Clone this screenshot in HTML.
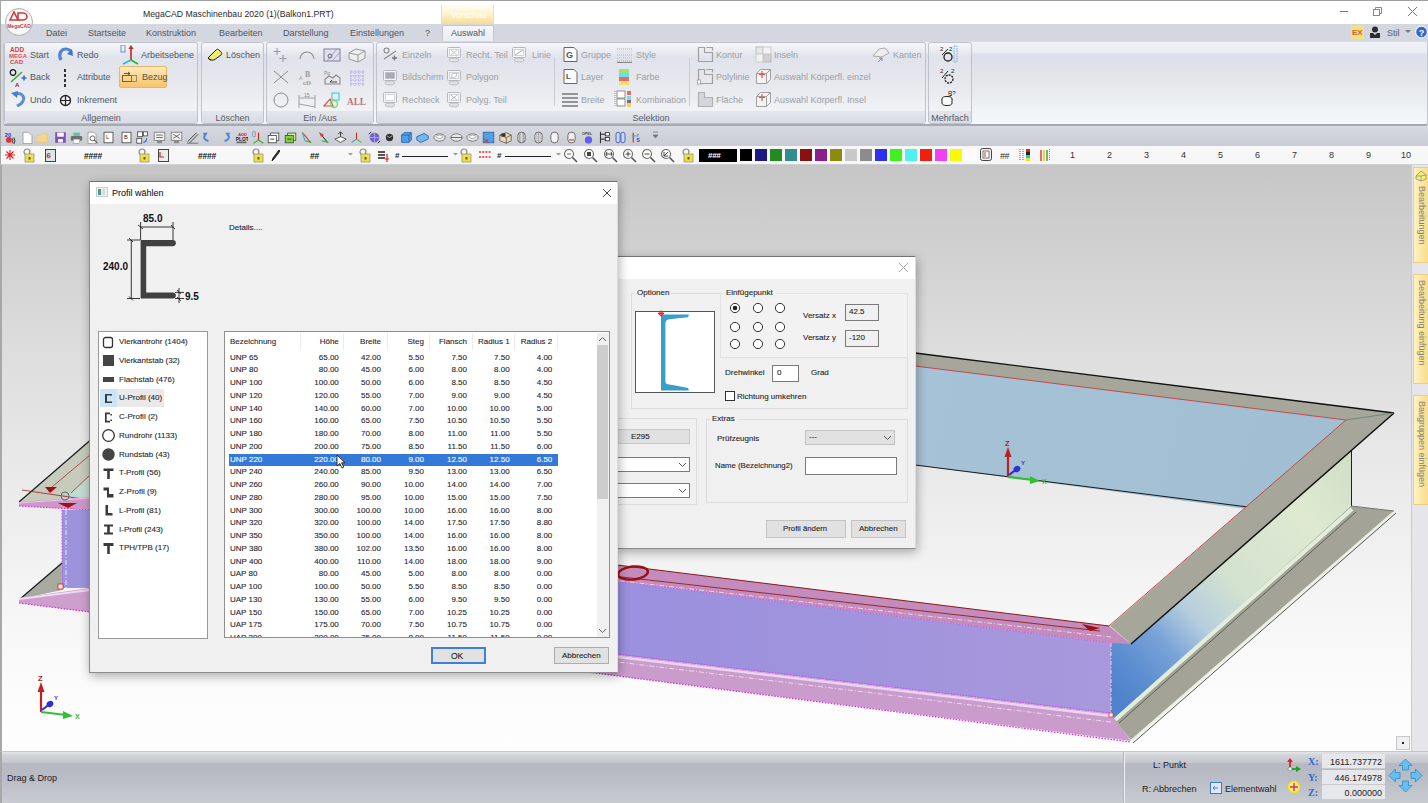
<!DOCTYPE html>
<html><head><meta charset="utf-8"><style>
*{box-sizing:border-box}
html,body{margin:0;padding:0}
body{width:1428px;height:803px;overflow:hidden;position:relative;font-family:"Liberation Sans",sans-serif;font-size:9px;color:#222;background:#fff}
.a{position:absolute}
.t{position:absolute;white-space:nowrap;line-height:10px}
#title{left:0;top:0;width:1428px;height:24px;background:#fff;border-top:1px solid #a0a0a0;border-left:1px solid #a8a8a8}
#tabs{left:0;top:24px;width:1428px;height:17px;background:#d4d7e0;border-left:1px solid #a8a8a8}
#ribbon{left:0;top:41px;width:1428px;height:85px;background:#d4d7e0;border-left:1px solid #a8a8a8}
#rbody{left:2px;top:0px;width:1425px;height:85px;border:1px solid #c4c7ce;border-top-color:#d8dbe3;border-bottom:2px solid #a6a9b0;border-radius:3px;background:linear-gradient(#eff1f7 0%,#eceef6 12%,#dde0ea 15%,#dfe2ea 30%,#e5e7eb 50%,#ebeef1 70%,#f2f5f8 88%,#f4f7f9 100%)}
.grp{position:absolute;top:42px;height:82px;border:1px solid #bfc2ca;border-radius:3px;background:linear-gradient(#f7f8fb 0%,#eceef4 8%,#e0e3eb 18%,#e4e6ec 40%,#eaecf0 65%,#f1f3f6 85%,#e4e7ec 100%)}
.glab{position:absolute;left:0;right:0;bottom:0;height:12px;text-align:center;color:#555a68;font-size:9px;line-height:14px;background:linear-gradient(#e3e6eb,#d9dce2);border-radius:0 0 3px 3px}
.rt{position:absolute;white-space:nowrap;font-size:9px;line-height:10px;color:#50545e}
.rg{color:#9a9ea6}
#tb1{left:0;top:126px;width:1428px;height:20px;background:linear-gradient(#d6d9e0,#c9ccd3);border-left:1px solid #a8a8a8}
#tb2{left:0;top:146px;width:1428px;height:19px;background:#f7f7f8;border-left:1px solid #a8a8a8;border-bottom:1px solid #cfd0d4}
#view{left:0;top:165px;width:1411px;height:586px;background:linear-gradient(#c6c6c6 0%,#cfcfcf 12%,#dcdcdc 30%,#e8e8e8 50%,#f4f4f4 72%,#fbfbfb 88%,#fefefe 100%);border-left:2px solid #a8a8a8}
#rpanel{left:1411px;top:165px;width:17px;height:586px;background:#e6e6ea;border-left:1px solid #cacace}
.vtab{position:absolute;left:1413px;width:15px;background:linear-gradient(90deg,#fff3c4,#f8dc8a);border:1px solid #e8cf84;border-right:none}
.vtab span{position:absolute;left:3px;top:4px;writing-mode:vertical-rl;font-size:9px;color:#85806c;white-space:nowrap}
#status{left:0;top:751px;width:1428px;height:52px;background:linear-gradient(#e2e4e8 0%,#d0d3d8 7%,#c5c8ce 20%,#b6b9c1 23%,#b9bcc4 50%,#c3c6cc 85%,#c8cbd0 100%);border-top:1px solid #c4c6cc;border-left:2px solid #a8a8a8}
.dlg{position:absolute;background:#f0f0f0;border:1px solid #8a8a8a;border-top-color:#737373;border-right-color:#dcdcdc;border-bottom-color:#8c8c8c;box-shadow:1px 3px 10px rgba(0,0,0,.32)}
.dt{position:absolute;white-space:nowrap;font-size:9px;line-height:10px;color:#1c1c24;-webkit-text-stroke:.1px currentColor}
.tb{position:absolute;white-space:nowrap;font-size:8px;line-height:9px;color:#1c1c2c}
.btn{position:absolute;background:#e1e1e1;border:1px solid #adadad;text-align:center;font-size:9px;color:#1c1c1c}
</style></head><body>
<div id="title" class="a"></div>
<div class="t" style="left:143px;top:9px;font-size:8.7px;color:#2a2a2a">MegaCAD Maschinenbau 2020 (1)(Balkon1.PRT)</div>
<div class="a" style="left:1340px;top:11px;width:8px;height:1px;background:#777"></div>
<svg class="a" style="left:1372px;top:6px;" width="11" height="11" viewBox="0 0 11 11"><rect x="1.5" y="3.5" width="6" height="6" fill="none" stroke="#888"/><path d="M3.5 3.5 V1.5 H9.5 V7.5 H7.5" fill="none" stroke="#888"/></svg>
<svg class="a" style="left:1407px;top:6px;" width="11" height="11" viewBox="0 0 11 11"><path d="M1 1 L10 10 M10 1 L1 10" stroke="#777" stroke-width="1"/></svg>
<div class="a" style="left:441px;top:5px;width:53px;height:19px;background:linear-gradient(#fffdf6 0%,#fdf0c8 55%,#f6dc8c 100%);border-left:1px solid #f0e0b0;border-right:1px solid #f0e0b0"></div>
<div class="t" style="left:451px;top:10px;font-size:8.5px;color:#fff">Vorschau</div>
<div id="tabs" class="a"></div>
<div class="t" style="left:46px;top:28px;font-size:9px;color:#4e5566">Datei</div>
<div class="t" style="left:88px;top:28px;font-size:9px;color:#4e5566">Startseite</div>
<div class="t" style="left:146px;top:28px;font-size:9px;color:#4e5566">Konstruktion</div>
<div class="t" style="left:219px;top:28px;font-size:9px;color:#4e5566">Bearbeiten</div>
<div class="t" style="left:283px;top:28px;font-size:9px;color:#4e5566">Darstellung</div>
<div class="t" style="left:350px;top:28px;font-size:9px;color:#4e5566">Einstellungen</div>
<div class="t" style="left:425px;top:28px;font-size:9px;color:#4e5566">?</div>
<div class="a" style="left:442px;top:25px;width:52px;height:17px;background:linear-gradient(#f4f6f9,#e9ecf1);border:1px solid #c3c6cd;border-bottom:none;border-radius:2px 2px 0 0"></div>
<div class="t" style="left:451px;top:28px;font-size:9px;color:#4e5566">Auswahl</div>
<div class="a" style="left:1351px;top:26px;width:13px;height:13px;background:#f4e27a"></div>
<div class="t" style="left:1352px;top:28px;font-size:8px;color:#d06030"><b>EX</b></div>
<svg class="a" style="left:1369px;top:26px;" width="12" height="13" viewBox="0 0 12 13"><circle cx="6" cy="3.5" r="3" fill="#2c2c2c"/><path d="M1 7 H4 L6 9 L8 7 H11 V12 H1 Z" fill="#2c2c2c"/></svg>
<div class="t" style="left:1387px;top:28px;font-size:9px;color:#5a6070">Stil</div>
<svg class="a" style="left:1405px;top:30px;" width="6" height="4" viewBox="0 0 6 4"><path d="M0 0 H6 L3 3 Z" fill="#777"/></svg>
<svg class="a" style="left:1415px;top:25px;" width="13" height="14" viewBox="0 0 13 14"><circle cx="6.5" cy="7" r="5.8" fill="#2e6ad0" stroke="#ffffff" stroke-width="1"/><text x="6.5" y="10.5" font-size="9" font-weight="bold" text-anchor="middle" fill="#fff" font-family="Liberation Sans">?</text></svg>
<svg class="a" style="left:4px;top:7px;" width="30" height="30" viewBox="0 0 30 30"><circle cx="15" cy="15" r="13.5" fill="#f4f4f4" stroke="#b0b0b0" stroke-width="1"/><circle cx="15" cy="15" r="12" fill="#fafafa"/><path d="M6 13 L10 5 L14 13 Z" fill="none" stroke="#c83c3c" stroke-width="1.6"/><path d="M14 6 h5 a4 3.5 0 0 1 0 7 h-5 z" fill="none" stroke="#c83c3c" stroke-width="1.6"/><text x="15" y="20.5" font-size="5" font-weight="bold" text-anchor="middle" fill="#c03a3a" font-family="Liberation Sans">MegaCAD</text></svg>
<div id="ribbon" class="a"><div id="rbody" class="a"></div></div>
<div class="grp" style="left:4px;width:194px"><div class="glab">Allgemein</div></div>
<div class="grp" style="left:201px;width:63px"><div class="glab">Löschen</div></div>
<div class="grp" style="left:266px;width:108px"><div class="glab">Ein /Aus</div></div>
<div class="grp" style="left:376px;width:550px"><div class="glab">Selektion</div></div>
<div class="grp" style="left:928px;width:44px"><div class="glab">Mehrfach</div></div>
<svg class="a" style="left:9px;top:46px;" width="20" height="18" viewBox="0 0 20 18"><text x="1" y="6" font-size="6.5" font-weight="bold" fill="#e03838" font-family="Liberation Sans">ADD</text><text x="0" y="12" font-size="6" font-weight="bold" fill="#e85050" font-family="Liberation Sans">MEGA</text><text x="1" y="18" font-size="6" font-weight="bold" fill="#e03838" font-family="Liberation Sans">CAD</text></svg>
<div class="rt" style="left:30px;top:50px;">Start</div>
<svg class="a" style="left:57px;top:46px;" width="18" height="17" viewBox="0 0 18 17"><path d="M4 14 C1 8 4 3 9 3 C12 3 14 5 14 7" fill="none" stroke="#4f86cf" stroke-width="3.2"/><path d="M10 8 L16 10 L15 3 Z" fill="#3f76c4"/></svg>
<div class="rt" style="left:77px;top:50px;">Redo</div>
<svg class="a" style="left:120px;top:45px;" width="20" height="20" viewBox="0 0 20 20"><rect x="1" y="0" width="4" height="7" fill="none" stroke="#5878b8" stroke-width=".8"/><path d="M11 15 V3" stroke="#d02020" stroke-width="1.6"/><path d="M8.5 4 L11 0 L13.5 4 Z" fill="#d02020"/><path d="M11 15 L3 19" stroke="#28b8d8" stroke-width="1.6"/><path d="M11 15 L18 19" stroke="#28b828" stroke-width="1.6"/></svg>
<div class="rt" style="left:141px;top:50px;">Arbeitsebene</div>
<svg class="a" style="left:9px;top:69px;" width="19" height="18" viewBox="0 0 19 18"><circle cx="4" cy="3.5" r="2.8" fill="none" stroke="#111" stroke-width="1.2"/><path d="M2 13 L13 3" stroke="#20b020" stroke-width="1.3"/><path d="M12.5 9 h5 M15 6.5 v5" stroke="#3070d0" stroke-width="1.6"/><text x="6" y="18" font-size="6" font-weight="bold" fill="#a02020" font-family="Liberation Sans">A</text></svg>
<div class="rt" style="left:30px;top:72px;">Back</div>
<div class="a" style="left:64px;top:69px;width:2px;height:18px;background:repeating-linear-gradient(#333 0 3px,transparent 3px 5px)"></div>
<div class="rt" style="left:77px;top:72px;">Attribute</div>
<div class="a" style="left:119px;top:66px;width:48px;height:22px;background:linear-gradient(#fde9bd 0%,#fbd68f 50%,#f7c56a 100%);border:1px solid #e3b868;border-radius:2px"></div>
<svg class="a" style="left:121px;top:71px;" width="17" height="12" viewBox="0 0 17 12"><rect x="1.5" y="4.5" width="9" height="6" fill="none" stroke="#555" stroke-width=".9"/><rect x="10.5" y="4.5" width="5" height="6" fill="none" stroke="#777" stroke-width=".8"/><path d="M3 2.5 H9 M7 1 L9 2.5 L7 4" stroke="#333" fill="none" stroke-width=".8"/></svg>
<div class="rt" style="left:142px;top:72px;">Bezug</div>
<svg class="a" style="left:10px;top:91px;" width="16" height="16" viewBox="0 0 16 16"><path d="M5 3 C12 1 15 6 13 10 C12 13 9 14 7 15" fill="none" stroke="#5a8fd3" stroke-width="3"/><path d="M1 2 L8 0 L7 7 Z" fill="#4a80c8"/></svg>
<div class="rt" style="left:30px;top:95px;">Undo</div>
<svg class="a" style="left:59px;top:94px;" width="13" height="13" viewBox="0 0 13 13"><circle cx="6.5" cy="6.5" r="5" fill="none" stroke="#222" stroke-width="1.3"/><path d="M1.5 6.5 H11.5 M6.5 1.5 V11.5" stroke="#222" stroke-width="1.2"/></svg>
<div class="rt" style="left:77px;top:95px;">Inkrement</div>
<svg class="a" style="left:207px;top:48px;" width="16" height="13" viewBox="0 0 16 13"><path d="M1 10 L9 2 C10 1 11 1 12 2 L14 4 C15 5 15 6 14 7 L7 12 L3 12 Z" fill="#f0f070" stroke="#222" stroke-width="1"/><path d="M1 10 L4 12" stroke="#222"/></svg>
<div class="rt" style="left:226px;top:50px;">Löschen</div>
<svg class="a" style="left:272px;top:47px;" width="20" height="17" viewBox="0 0 20 17"><path d="M5 1 v7 M1.5 4.5 h7 M11 8 v7 M7.5 11.5 h7" stroke="#9a9a9a" stroke-width="1.1"/></svg>
<svg class="a" style="left:298px;top:47px;" width="20" height="17" viewBox="0 0 20 17"><path d="M2 12 A7 7 0 0 1 16 12" fill="none" stroke="#8a8a8a" stroke-width="1.1"/></svg>
<svg class="a" style="left:323px;top:47px;" width="20" height="17" viewBox="0 0 20 17"><rect x="1" y="2" width="16" height="12" fill="#e0e0ee" stroke="#9090a8" stroke-width="1.2"/><path d="M4 14 L14 2 M9 14 L17 5" stroke="#9090c0" stroke-width=".8"/><circle cx="7" cy="9" r="2" fill="none" stroke="#666"/></svg>
<svg class="a" style="left:348px;top:47px;" width="20" height="17" viewBox="0 0 20 17"><path d="M1 6 L8 2 L17 4 V11 L10 15 L1 12 Z" fill="#eee" stroke="#999" stroke-width="1"/><path d="M1 6 L10 8 L17 4 M10 8 V15" fill="none" stroke="#999"/></svg>
<svg class="a" style="left:272px;top:69px;" width="20" height="17" viewBox="0 0 20 17"><path d="M2 2 L16 14 M2 14 L16 2" stroke="#8a8a8a" stroke-width="1"/></svg>
<svg class="a" style="left:298px;top:69px;" width="20" height="17" viewBox="0 0 20 17"><text x="7" y="8" font-size="8" font-weight="bold" fill="#9a9a9a" font-family="Liberation Serif">B</text><text x="1" y="11" font-size="5" fill="#9a9a9a">A</text><text x="5" y="16" font-size="7" font-weight="bold" fill="#9a9a9a" font-family="Liberation Serif">cD</text></svg>
<svg class="a" style="left:323px;top:69px;" width="20" height="17" viewBox="0 0 20 17"><text x="1" y="6" font-size="5" fill="#888">Po</text><path d="M2 15 V10 L6 7 L10 9 L13 6 L17 9 V15 Z" fill="none" stroke="#888" stroke-width="1.1"/><path d="M7 13 H14 M7 13 L9 11" stroke="#444" fill="none"/></svg>
<svg class="a" style="left:348px;top:69px;" width="20" height="17" viewBox="0 0 20 17"><path d="M2 3 H16 M2 7 H16 M2 11 H16 M2 15 H16 M3 1 V17 M7 1 V17 M11 1 V17 M15 1 V17" stroke="#8a80f0" stroke-width=".6" stroke-dasharray="1.5 1"/></svg>
<svg class="a" style="left:272px;top:92px;" width="20" height="17" viewBox="0 0 20 17"><circle cx="9" cy="8" r="7" fill="none" stroke="#8a8a8a" stroke-width="1"/></svg>
<svg class="a" style="left:298px;top:92px;" width="20" height="17" viewBox="0 0 20 17"><path d="M1 3 V16 M17 3 V16 M1 6 H17 M1 12 L17 15" stroke="#a0a0a0" stroke-width="1"/><text x="6" y="5" font-size="5" fill="#888">15</text></svg>
<svg class="a" style="left:323px;top:92px;" width="20" height="17" viewBox="0 0 20 17"><path d="M1 14 L7 7 L10 14 Z" fill="none" stroke="#e05050" stroke-width="1.2"/><rect x="9" y="1" width="7" height="7" fill="none" stroke="#50d8e8" stroke-width="1.4"/><circle cx="11" cy="12" r="3.5" fill="none" stroke="#70e070" stroke-width="1.4"/></svg>
<svg class="a" style="left:347px;top:92px;" width="20" height="17" viewBox="0 0 20 17"><text x="0" y="13" font-size="9.5" font-weight="bold" fill="#b07878" font-family="Liberation Serif" textLength="19" lengthAdjust="spacingAndGlyphs">ALL</text></svg>
<svg class="a" style="left:383px;top:47px;" width="15" height="15" viewBox="0 0 15 15"><circle cx="3.5" cy="3.5" r="2.5" fill="none" stroke="#8a8a8a" stroke-width="1.1"/><path d="M1 12 L13 4" stroke="#8a8a8a" stroke-width="1.2"/><path d="M9 11 h5 M11.5 8.5 v5" stroke="#777" stroke-width="1.3"/></svg>
<div class="rt rg" style="left:402px;top:50px;">Einzeln</div>
<svg class="a" style="left:382px;top:69px;" width="17" height="17" viewBox="0 0 17 17"><rect x="1.5" y="1.5" width="13" height="10" rx="1" fill="#f4f5f6" stroke="#b4b8be"/><rect x="3.5" y="3.5" width="9" height="6" fill="#fff" stroke="#c8cbd0" stroke-width=".8"/><rect x="3.5" y="3.5" width="9" height="6" fill="#a8acb2"/><ellipse cx="8" cy="14" rx="5" ry="2" fill="#e0e2e5" stroke="#b4b8be" stroke-width=".8"/></svg>
<div class="rt rg" style="left:402px;top:72px;">Bildschirm</div>
<svg class="a" style="left:382px;top:91px;" width="17" height="17" viewBox="0 0 17 17"><rect x="1.5" y="1.5" width="13" height="10" rx="1" fill="#f4f5f6" stroke="#b4b8be"/><rect x="3.5" y="3.5" width="9" height="6" fill="#fff" stroke="#c8cbd0" stroke-width=".8"/><ellipse cx="8" cy="14" rx="5" ry="2" fill="#e0e2e5" stroke="#b4b8be" stroke-width=".8"/></svg>
<div class="rt rg" style="left:402px;top:95px;">Rechteck</div>
<svg class="a" style="left:446px;top:46px;" width="17" height="17" viewBox="0 0 17 17"><rect x="1.5" y="1.5" width="13" height="10" rx="1" fill="#f4f5f6" stroke="#b4b8be"/><rect x="3.5" y="3.5" width="9" height="6" fill="#fff" stroke="#c8cbd0" stroke-width=".8"/><path d="M5 4 L11 9 M11 4 L5 9" stroke="#aaa" stroke-width=".7"/><ellipse cx="8" cy="14" rx="5" ry="2" fill="#e0e2e5" stroke="#b4b8be" stroke-width=".8"/></svg>
<div class="rt rg" style="left:466px;top:50px;">Recht. Teil</div>
<svg class="a" style="left:446px;top:69px;" width="17" height="17" viewBox="0 0 17 17"><rect x="1.5" y="1.5" width="13" height="10" rx="1" fill="#f4f5f6" stroke="#b4b8be"/><rect x="3.5" y="3.5" width="9" height="6" fill="#fff" stroke="#c8cbd0" stroke-width=".8"/><path d="M5 9 L6 5 L11 4 L10 8 Z" fill="none" stroke="#aaa" stroke-width=".7"/><ellipse cx="8" cy="14" rx="5" ry="2" fill="#e0e2e5" stroke="#b4b8be" stroke-width=".8"/></svg>
<div class="rt rg" style="left:466px;top:72px;">Polygon</div>
<svg class="a" style="left:446px;top:91px;" width="17" height="17" viewBox="0 0 17 17"><rect x="1.5" y="1.5" width="13" height="10" rx="1" fill="#f4f5f6" stroke="#b4b8be"/><rect x="3.5" y="3.5" width="9" height="6" fill="#fff" stroke="#c8cbd0" stroke-width=".8"/><path d="M5 4 L11 9 M11 4 L5 9" stroke="#999" stroke-width=".7"/><ellipse cx="8" cy="14" rx="5" ry="2" fill="#e0e2e5" stroke="#b4b8be" stroke-width=".8"/></svg>
<div class="rt rg" style="left:466px;top:95px;">Polyg. Teil</div>
<svg class="a" style="left:511px;top:46px;" width="17" height="17" viewBox="0 0 17 17"><rect x="1.5" y="1.5" width="13" height="10" rx="1" fill="#f4f5f6" stroke="#b4b8be"/><rect x="3.5" y="3.5" width="9" height="6" fill="#fff" stroke="#c8cbd0" stroke-width=".8"/><path d="M4 9 L12 4" stroke="#999" stroke-width=".8"/><ellipse cx="8" cy="14" rx="5" ry="2" fill="#e0e2e5" stroke="#b4b8be" stroke-width=".8"/></svg>
<div class="rt rg" style="left:532px;top:50px;">Linie</div>
<div class="a" style="left:554px;top:58px;width:1px;height:48px;background:#c8cbd0"></div>
<svg class="a" style="left:562px;top:46px;" width="17" height="17" viewBox="0 0 17 17"><path d="M2 1.5 H12 L15 4.5 V15.5 H2 Z" fill="#fafafa" stroke="#666" stroke-width="1"/><text x="4" y="12" font-size="9" font-weight="bold" fill="#555" font-family="Liberation Sans">G</text></svg>
<div class="rt rg" style="left:581px;top:50px;">Gruppe</div>
<svg class="a" style="left:562px;top:68px;" width="17" height="17" viewBox="0 0 17 17"><path d="M2 1.5 H12 L15 4.5 V15.5 H2 Z" fill="#fafafa" stroke="#666" stroke-width="1"/><text x="4" y="11" font-size="8" font-weight="bold" fill="#555" font-family="Liberation Sans">L</text></svg>
<div class="rt rg" style="left:581px;top:72px;">Layer</div>
<svg class="a" style="left:561px;top:92px;" width="18" height="15" viewBox="0 0 18 15"><path d="M1 2 H17 M1 6 H17 M1 10 H17 M1 14 H17" stroke="#777" stroke-width="1.6"/></svg>
<div class="rt rg" style="left:581px;top:95px;">Breite</div>
<svg class="a" style="left:616px;top:46px;" width="17" height="17" viewBox="0 0 17 17"><g stroke-width="1.2" stroke-dasharray="1 1"><path d="M1 3 H16" stroke="#e88"/><path d="M1 6 H16" stroke="#ec8"/><path d="M1 9 H16" stroke="#8c8"/><path d="M1 12 H16" stroke="#8ce"/><path d="M1 15 H16" stroke="#a8e"/></g><path d="M1 16.5 H16" stroke="#888"/></svg>
<div class="rt rg" style="left:636px;top:50px;">Style</div>
<svg class="a" style="left:618px;top:68px;" width="12" height="17" viewBox="0 0 12 17"><rect x="1" y="1" width="10" height="4" fill="#9ce27a"/><rect x="1" y="5" width="10" height="4" fill="#6ae0e8"/><rect x="1" y="9" width="10" height="4" fill="#e86a6a"/><rect x="1" y="13" width="10" height="4" fill="#f0e070"/></svg>
<div class="rt rg" style="left:636px;top:72px;">Farbe</div>
<svg class="a" style="left:614px;top:90px;" width="20" height="18" viewBox="0 0 20 18"><rect x="3" y="1" width="8" height="7" fill="#fff" stroke="#777" stroke-width=".8"/><rect x="3" y="9" width="8" height="7" fill="#fff" stroke="#777" stroke-width=".8"/><path d="M1 1 V17" stroke="#999" stroke-dasharray="1 1"/><rect x="13" y="1" width="4" height="4" fill="#e86a6a"/><rect x="13" y="6" width="4" height="4" fill="#6ae0e8"/><rect x="13" y="10" width="4" height="3" fill="#a06060"/><rect x="13" y="13" width="4" height="4" fill="#e8d860"/></svg>
<div class="rt rg" style="left:636px;top:95px;">Kombination</div>
<div class="a" style="left:689px;top:58px;width:1px;height:48px;background:#c8cbd0"></div>
<svg class="a" style="left:697px;top:46px;" width="17" height="17" viewBox="0 0 17 17"><path d="M1.5 1.5 H7.5 V6.5 H15.5 V15.5 H1.5 Z" fill="none" stroke="#a0a0a0" stroke-width="1.2"/><path d="M9.5 1.5 H15.5 V4.5" fill="none" stroke="#a0a0a0" stroke-width="1.2"/></svg>
<div class="rt rg" style="left:716px;top:50px;">Kontur</div>
<svg class="a" style="left:697px;top:68px;" width="17" height="17" viewBox="0 0 17 17"><path d="M1.5 1.5 H7.5 V6.5 H15.5 V15.5 H1.5 Z" fill="none" stroke="#a0a0a0" stroke-width="1.2"/><path d="M9.5 1.5 H15.5 V4.5" fill="none" stroke="#a0a0a0" stroke-width="1.2"/><rect x=".5" y="12" width="3" height="4" fill="#fff" stroke="#999" stroke-width=".8"/></svg>
<div class="rt rg" style="left:716px;top:72px;">Polylinie</div>
<svg class="a" style="left:697px;top:91px;" width="17" height="17" viewBox="0 0 17 17"><path d="M1.5 1.5 H7.5 V6.5 H15.5 V15.5 H1.5 Z" fill="#d4d6da" stroke="#b0b0b0" stroke-width="1.2"/></svg>
<div class="rt rg" style="left:716px;top:95px;">Fläche</div>
<svg class="a" style="left:755px;top:46px;" width="17" height="17" viewBox="0 0 17 17"><rect x="1" y="1" width="7" height="7" fill="#e8e8e8" stroke="#bbb"/><rect x="8" y="8" width="8" height="8" fill="#d0d0d0" stroke="#bbb"/><rect x="8" y="1" width="8" height="7" fill="#f2f2f2" stroke="#ccc"/><rect x="1" y="8" width="7" height="8" fill="#f2f2f2" stroke="#ccc"/></svg>
<div class="rt rg" style="left:774px;top:50px;">Inseln</div>
<svg class="a" style="left:755px;top:68px;" width="17" height="17" viewBox="0 0 17 17"><path d="M1.5 5.5 H11.5 V15.5 H1.5 Z M1.5 5.5 L5.5 1.5 H15.5 V11.5 L11.5 15.5 M11.5 5.5 L15.5 1.5" fill="#f4f4f4" stroke="#a0a0a0" stroke-width="1"/><path d="M7 3 V10 M4 6.5 H10" stroke="#e05050" stroke-width="1.2"/></svg>
<div class="rt rg" style="left:774px;top:72px;">Auswahl Körperfl. einzel</div>
<svg class="a" style="left:755px;top:91px;" width="17" height="17" viewBox="0 0 17 17"><path d="M1.5 5.5 H11.5 V15.5 H1.5 Z M1.5 5.5 L5.5 1.5 H15.5 V11.5 L11.5 15.5 M11.5 5.5 L15.5 1.5" fill="#f4f4f4" stroke="#a0a0a0" stroke-width="1"/><path d="M7 3 V10 M4 6.5 H10" stroke="#e05050" stroke-width="1.2"/></svg>
<div class="rt rg" style="left:774px;top:95px;">Auswahl Körperfl. Insel</div>
<svg class="a" style="left:872px;top:46px;" width="18" height="17" viewBox="0 0 18 17"><path d="M1 10 L7 3 L13 2 L17 7 L10 11 Z" fill="#eee" stroke="#aaa" stroke-width="1"/><path d="M6 16 L10 12 M10 12 v3 M10 12 h-3" stroke="#888" fill="none"/></svg>
<div class="rt rg" style="left:893px;top:50px;">Kanten</div>
<svg class="a" style="left:940px;top:45px;" width="18" height="18" viewBox="0 0 18 18"><text x="0" y="6" font-size="6" fill="#222">2</text><text x="9" y="6" font-size="6" fill="#222">2</text><path d="M2 10 L8 4" stroke="#222"/><circle cx="8" cy="12" r="4" fill="none" stroke="#222" stroke-width="1.3"/><rect x="14" y="1" width="3" height="16" fill="none" stroke="#7aa8e0" stroke-dasharray="1.5 1"/></svg>
<svg class="a" style="left:940px;top:67px;" width="18" height="18" viewBox="0 0 18 18"><text x="0" y="6" font-size="6" fill="#222">2</text><text x="11" y="6" font-size="6" fill="#222">2</text><path d="M2 11 L8 4" stroke="#222"/><circle cx="9" cy="12" r="4" fill="none" stroke="#222" stroke-width="1.3" stroke-dasharray="2 1"/></svg>
<svg class="a" style="left:940px;top:89px;" width="18" height="18" viewBox="0 0 18 18"><text x="8" y="6" font-size="6" fill="#222">R?</text><path d="M7 8 L12 6" stroke="#222"/><ellipse cx="7" cy="10" rx="5" ry="2.5" fill="#fff" stroke="#222"/><path d="M2 10 V14 A5 2.5 0 0 0 12 14 V10" fill="#fff" stroke="#222"/></svg>
<div id="tb1" class="a"></div>
<div id="tb2" class="a"></div>
<svg class="a" style="left:4px;top:131px" width="13" height="13" viewBox="0 0 16 16"><text x="1" y="7" font-size="7" font-weight="bold" fill="#2040d0" font-family="Liberation Sans">20</text><circle cx="6" cy="11" r="3.5" fill="#e03030"/><path d="M10 9 q2 3 0 6 M12 8 q3 4 0 8" fill="none" stroke="#222" stroke-width="1.1"/></svg>
<svg class="a" style="left:21px;top:131px" width="13" height="13" viewBox="0 0 16 16"><path d="M2.5 1.5 H9.5 L13.5 5.5 V15.5 H2.5 Z" fill="#fff" stroke="#999"/></svg>
<svg class="a" style="left:36px;top:131px" width="13" height="13" viewBox="0 0 16 16"><path d="M1 5 H6 L7 3 H14 V14 H1 Z" fill="#f2d68a" stroke="#e0c070" stroke-width=".6"/></svg>
<svg class="a" style="left:54px;top:131px" width="13" height="13" viewBox="0 0 16 16"><rect x="1.5" y="1.5" width="13" height="13" fill="#8050b8"/><rect x="4" y="2" width="8" height="5" fill="#fff"/><rect x="5" y="10" width="6" height="4" fill="#fff"/></svg>
<svg class="a" style="left:70px;top:131px" width="13" height="13" viewBox="0 0 16 16"><rect x="1" y="6" width="14" height="6" rx="1.5" fill="#707070"/><rect x="4" y="2" width="8" height="4" fill="#60c0a0"/><rect x="4" y="10" width="8" height="5" fill="#fff" stroke="#777" stroke-width=".5"/></svg>
<svg class="a" style="left:86px;top:131px" width="13" height="13" viewBox="0 0 16 16"><path d="M2.5 1.5 H9.5 L12.5 4.5 V15.5 H2.5 Z" fill="#fff" stroke="#999"/><circle cx="8" cy="9" r="3" fill="none" stroke="#555" stroke-width="1.1"/><path d="M10 11 L14 15" stroke="#555" stroke-width="1.4"/></svg>
<svg class="a" style="left:102px;top:131px" width="13" height="13" viewBox="0 0 16 16"><rect x="2.5" y="1.5" width="11" height="13" fill="#fff" stroke="#444"/><text x="5" y="10" font-size="7" fill="#222">L</text></svg>
<svg class="a" style="left:120px;top:131px" width="13" height="13" viewBox="0 0 16 16"><rect x="2.5" y="1.5" width="11" height="13" fill="#fff" stroke="#444"/><text x="5" y="10" font-size="7" fill="#222">B</text></svg>
<svg class="a" style="left:136px;top:131px" width="13" height="13" viewBox="0 0 16 16"><rect x="2" y="1" width="6" height="6" fill="#fff" stroke="#444"/><rect x="9" y="1" width="5" height="5" fill="#fff" stroke="#444"/><rect x="1" y="9" width="6" height="6" fill="#fff" stroke="#444"/><path d="M9 14 q4 0 4 -5" stroke="#2060d0" fill="none" stroke-width="1.3"/></svg>
<svg class="a" style="left:153px;top:131px" width="13" height="13" viewBox="0 0 16 16"><rect x="1.5" y="1.5" width="13" height="10" fill="#f0f0f0" stroke="#777"/><path d="M4 5 H12 M4 8 H12" stroke="#555"/><rect x="5" y="12" width="6" height="3" fill="#888"/></svg>
<svg class="a" style="left:170px;top:131px" width="13" height="13" viewBox="0 0 16 16"><rect x="1.5" y="1.5" width="13" height="10" fill="#f0f0f0" stroke="#777"/><path d="M4 4 L12 9 M12 4 L4 9" stroke="#555"/><rect x="5" y="12" width="6" height="3" fill="#888"/></svg>
<svg class="a" style="left:186px;top:131px" width="13" height="13" viewBox="0 0 16 16"><path d="M2 13 L13 2 M4 15 L15 4" stroke="#444" stroke-width="1.2"/><path d="M1 15 H15" stroke="#666"/></svg>
<svg class="a" style="left:202px;top:131px" width="13" height="13" viewBox="0 0 16 16"><path d="M4 4 C1 7 3 12 8 12" fill="none" stroke="#4a88d8" stroke-width="2.2"/><path d="M1 2 L7 2 L4 7 Z" fill="#4a88d8"/></svg>
<svg class="a" style="left:218px;top:131px" width="13" height="13" viewBox="0 0 16 16"><path d="M12 4 C15 7 13 12 8 12" fill="none" stroke="#4a88d8" stroke-width="2.2"/><path d="M15 2 L9 2 L12 7 Z" fill="#4a88d8"/></svg>
<svg class="a" style="left:235px;top:131px" width="13" height="13" viewBox="0 0 16 16"><text x="4" y="6" font-size="5" font-weight="bold" fill="#e02020">ADD</text><text x="1" y="12" font-size="6" font-weight="bold" fill="#222">PLOT</text><rect x="2" y="13" width="12" height="2" fill="#666"/></svg>
<svg class="a" style="left:252px;top:131px" width="13" height="13" viewBox="0 0 16 16"><rect x="1" y="1" width="3" height="6" fill="none" stroke="#5878b8" stroke-width=".7"/><path d="M8 11 V2" stroke="#d02020" stroke-width="1.4"/><path d="M8 11 L2 15 M8 11 L14 15" stroke="#28b828" stroke-width="1.4"/></svg>
<svg class="a" style="left:267px;top:131px" width="13" height="13" viewBox="0 0 16 16"><rect x="4.5" y="2.5" width="10" height="9" fill="#fff" stroke="#444"/><rect x="1.5" y="5.5" width="10" height="9" fill="#fff" stroke="#444"/><path d="M4 10 H9" stroke="#222"/></svg>
<svg class="a" style="left:284px;top:131px" width="13" height="13" viewBox="0 0 16 16"><rect x="4.5" y="2.5" width="10" height="9" fill="#d8f0a0" stroke="#444"/><rect x="1.5" y="5.5" width="10" height="9" fill="#80d040" stroke="#444"/><path d="M4 10 H9" stroke="#222"/></svg>
<svg class="a" style="left:300px;top:131px" width="13" height="13" viewBox="0 0 16 16"><path d="M3 2 L13 14" stroke="#e03838" stroke-width="1.3"/><path d="M3 2 L6 12" stroke="#20b8d8" stroke-width="1.3"/><path d="M6 12 L14 14" stroke="#28c028" stroke-width="1.3"/></svg>
<svg class="a" style="left:317px;top:131px" width="13" height="13" viewBox="0 0 16 16"><path d="M3 2 L13 14" stroke="#222" stroke-width="1.2"/><circle cx="6" cy="5" r="2" fill="#e03838"/><path d="M6 12 L14 14" stroke="#28c028" stroke-width="1.3"/></svg>
<svg class="a" style="left:334px;top:131px" width="13" height="13" viewBox="0 0 16 16"><path d="M8 1 V10 M5 4 L8 1 L11 4" stroke="#222" fill="none"/><path d="M1 10 L8 7 L15 10 L8 14 Z" fill="#fff" stroke="#444"/></svg>
<svg class="a" style="left:350px;top:131px" width="13" height="13" viewBox="0 0 16 16"><path d="M8 2 V10" stroke="#d02020" stroke-width="1.3"/><path d="M8 10 L2 14" stroke="#20a8d8" stroke-width="1.3"/><path d="M8 10 L14 14" stroke="#28c028" stroke-width="1.3"/></svg>
<svg class="a" style="left:368px;top:131px" width="13" height="13" viewBox="0 0 16 16"><circle cx="8" cy="8" r="6" fill="#7060d0"/><path d="M2 8 H14 M8 2 V14" stroke="#d0c0ff" stroke-width=".8"/><path d="M1 4 L4 1 M12 15 L15 12" stroke="#222" stroke-width="1.2"/></svg>
<svg class="a" style="left:383px;top:131px" width="13" height="13" viewBox="0 0 16 16"><circle cx="8" cy="8" r="4.5" fill="#333"/><path d="M5 6 L8 8 L11 6" stroke="#ccc" fill="none"/></svg>
<svg class="a" style="left:400px;top:131px" width="13" height="13" viewBox="0 0 16 16"><path d="M2 5 L5 2 H14 V11 L11 14 H2 Z" fill="#50a0e8" stroke="#2060b0"/><path d="M2 5 H11 V14 M11 5 L14 2" fill="none" stroke="#2060b0"/></svg>
<svg class="a" style="left:416px;top:131px" width="13" height="13" viewBox="0 0 16 16"><path d="M1 7 L10 3 L15 6 V10 L6 14 L1 11 Z" fill="#70b8f0" stroke="#2060b0"/></svg>
<svg class="a" style="left:433px;top:131px" width="13" height="13" viewBox="0 0 16 16"><ellipse cx="8" cy="8" rx="7" ry="4.5" fill="#e8e8e8" stroke="#666"/><ellipse cx="8" cy="7" rx="4" ry="2" fill="#fff" stroke="#777" stroke-width=".7"/></svg>
<svg class="a" style="left:450px;top:131px" width="13" height="13" viewBox="0 0 16 16"><ellipse cx="8" cy="8" rx="7" ry="4.5" fill="#e8e8e8" stroke="#666"/><path d="M1 8 H15" stroke="#3070c0" stroke-width="1.2"/></svg>
<svg class="a" style="left:466px;top:131px" width="13" height="13" viewBox="0 0 16 16"><ellipse cx="8" cy="8" rx="7" ry="4.5" fill="#e8e8e8" stroke="#666"/><ellipse cx="8" cy="7" rx="4" ry="2" fill="#fff" stroke="#777" stroke-width=".7"/></svg>
<svg class="a" style="left:482px;top:131px" width="13" height="13" viewBox="0 0 16 16"><rect x="1.5" y="1.5" width="13" height="13" fill="#50a0e8" stroke="#3060a0"/><path d="M3 10 L8 14 M3 14 L8 10" stroke="#e03030" stroke-width="1.3"/></svg>
<svg class="a" style="left:499px;top:131px" width="13" height="13" viewBox="0 0 16 16"><path d="M1 5 L9 2 L15 5 V12 L9 15 L1 12 Z" fill="#f0d8b0" stroke="#555"/><path d="M1 5 L9 8 L15 5 M9 8 V15" stroke="#555" fill="none"/><rect x="3" y="3" width="5" height="4" fill="#333"/></svg>
<svg class="a" style="left:515px;top:131px" width="13" height="13" viewBox="0 0 16 16"><rect x="3.5" y="1.5" width="9" height="13" rx="4" fill="#ddd" stroke="#555"/><path d="M6 2 V14 M10 2 V14" stroke="#777"/></svg>
<svg class="a" style="left:532px;top:131px" width="13" height="13" viewBox="0 0 16 16"><rect x="3.5" y="1.5" width="9" height="13" rx="4" fill="#eee" stroke="#555"/><path d="M6 2 V14 M8 2 V14 M10 2 V14" stroke="#777" stroke-width=".7"/></svg>
<svg class="a" style="left:548px;top:131px" width="13" height="13" viewBox="0 0 16 16"><rect x="3.5" y="1.5" width="9" height="13" rx="4" fill="#f4f4f4" stroke="#555"/></svg>
<svg class="a" style="left:565px;top:131px" width="13" height="13" viewBox="0 0 16 16"><rect x="3.5" y="1.5" width="9" height="13" rx="4" fill="#eee" stroke="#555"/><path d="M5 11 H11" stroke="#e03030" stroke-width="1.4"/></svg>
<svg class="a" style="left:582px;top:131px" width="13" height="13" viewBox="0 0 16 16"><text x="0" y="5" font-size="4.5" font-weight="bold" fill="#444">OPEL</text><circle cx="8" cy="11" r="4.5" fill="#6060e8"/></svg>
<svg class="a" style="left:598px;top:131px" width="13" height="13" viewBox="0 0 16 16"><path d="M3 1 V15 M3 4 H9 M3 10 H9" stroke="#222" stroke-width="1.2"/><rect x="9" y="2" width="5" height="4" fill="#fff" stroke="#222"/><rect x="9" y="8" width="5" height="4" fill="#fff" stroke="#222"/></svg>
<svg class="a" style="left:614px;top:131px" width="13" height="13" viewBox="0 0 16 16"><rect x="2.5" y="1.5" width="5" height="13" rx="2.5" fill="#c8d8f8" stroke="#3050c0"/><rect x="8.5" y="1.5" width="5" height="13" rx="2.5" fill="#c8d8f8" stroke="#3050c0"/></svg>
<svg class="a" style="left:630px;top:131px" width="13" height="13" viewBox="0 0 16 16"><path d="M4 2 V14" stroke="#e03030" stroke-width="1.5"/><path d="M2 6 H8" stroke="#20c0d0" stroke-width="1.5"/><text x="8" y="7" font-size="5" fill="#333">7</text><text x="8" y="14" font-size="6" font-weight="bold" fill="#2040c0">S</text></svg>
<svg class="a" style="left:652px;top:131px;" width="7" height="9" viewBox="0 0 7 9"><path d="M1 1 H6 M1 4 H6 L3.5 7 Z" stroke="#777" fill="#777" stroke-width=".8"/></svg>
<svg class="a" style="left:4px;top:149px;" width="13" height="13" viewBox="0 0 13 13"><path d="M6 1 V11 M1 6 H11 M2.5 2.5 L9.5 9.5 M9.5 2.5 L2.5 9.5" stroke="#e02020" stroke-width="1.1"/></svg>
<svg class="a" style="left:22px;top:148px;" width="14" height="15" viewBox="0 0 14 15"><circle cx="5" cy="4" r="3" fill="none" stroke="#888" stroke-width="1.2"/><rect x="3" y="6" width="9" height="8" fill="#f0e040" stroke="#888" stroke-width=".7"/><rect x="6.5" y="9" width="2" height="2.5" fill="#555"/></svg>
<svg class="a" style="left:137px;top:148px;" width="14" height="15" viewBox="0 0 14 15"><circle cx="5" cy="4" r="3" fill="none" stroke="#888" stroke-width="1.2"/><rect x="3" y="6" width="9" height="8" fill="#f0e040" stroke="#888" stroke-width=".7"/><rect x="6.5" y="9" width="2" height="2.5" fill="#555"/></svg>
<svg class="a" style="left:251px;top:148px;" width="14" height="15" viewBox="0 0 14 15"><circle cx="5" cy="4" r="3" fill="none" stroke="#888" stroke-width="1.2"/><rect x="3" y="6" width="9" height="8" fill="#f0e040" stroke="#888" stroke-width=".7"/><rect x="6.5" y="9" width="2" height="2.5" fill="#555"/></svg>
<svg class="a" style="left:358px;top:148px;" width="14" height="15" viewBox="0 0 14 15"><circle cx="5" cy="4" r="3" fill="none" stroke="#888" stroke-width="1.2"/><rect x="3" y="6" width="9" height="8" fill="#f0e040" stroke="#888" stroke-width=".7"/><rect x="6.5" y="9" width="2" height="2.5" fill="#555"/></svg>
<svg class="a" style="left:459px;top:148px;" width="14" height="15" viewBox="0 0 14 15"><circle cx="5" cy="4" r="3" fill="none" stroke="#888" stroke-width="1.2"/><rect x="3" y="6" width="9" height="8" fill="#f0e040" stroke="#888" stroke-width=".7"/><rect x="6.5" y="9" width="2" height="2.5" fill="#555"/></svg>
<svg class="a" style="left:681px;top:148px;" width="14" height="15" viewBox="0 0 14 15"><circle cx="5" cy="4" r="3" fill="none" stroke="#888" stroke-width="1.2"/><rect x="3" y="6" width="9" height="8" fill="#f0e040" stroke="#888" stroke-width=".7"/><rect x="6.5" y="9" width="2" height="2.5" fill="#555"/></svg>
<svg class="a" style="left:44px;top:148px;" width="13" height="15" viewBox="0 0 13 15"><rect x="1.5" y="1.5" width="10" height="12" fill="#d8e8e8" stroke="#444"/><text x="2.5" y="10" font-size="8" font-weight="bold" fill="#e02020">6</text></svg>
<svg class="a" style="left:157px;top:148px;" width="13" height="15" viewBox="0 0 13 15"><rect x="1.5" y="1.5" width="10" height="12" fill="#e8eeee" stroke="#444"/><path d="M3 4 V9 H7" stroke="#e02020" stroke-width="1.2" fill="none"/></svg>
<div class="t" style="left:84px;top:151px;font-size:8.5px;color:#111;letter-spacing:-.2px"><b>####</b></div>
<div class="t" style="left:198px;top:151px;font-size:8.5px;color:#111;letter-spacing:-.2px"><b>####</b></div>
<div class="t" style="left:310px;top:151px;font-size:8.5px;color:#111;letter-spacing:-.2px"><b>##</b></div>
<svg class="a" style="left:270px;top:148px;" width="10" height="15" viewBox="0 0 10 15"><path d="M2 13 L3 10 L9 2 L10 3 L4 11 Z" fill="#333" stroke="#222"/></svg>
<svg class="a" style="left:348px;top:153px;" width="6" height="4" viewBox="0 0 6 4"><path d="M0 0 H5 L2.5 2.5 Z" fill="#999"/></svg>
<svg class="a" style="left:377px;top:148px;" width="12" height="15" viewBox="0 0 12 15"><path d="M1 4 H8 M1 7 H8 M1 10 H8" stroke="#222" stroke-width="1.6"/><path d="M10 6 V14 M8 11 H12" stroke="#e02020" stroke-width="1.2"/></svg>
<div class="t" style="left:395px;top:151px;font-size:8px;color:#222"><b>#</b></div>
<div class="a" style="left:402px;top:156px;width:46px;height:1px;background:#222"></div>
<svg class="a" style="left:453px;top:153px;" width="6" height="4" viewBox="0 0 6 4"><path d="M0 0 H5 L2.5 2.5 Z" fill="#999"/></svg>
<svg class="a" style="left:478px;top:150px;" width="14" height="10" viewBox="0 0 14 10"><path d="M1 2 H13 M1 7 H13" stroke="#e03030" stroke-width="1.3" stroke-dasharray="2 1.2"/></svg>
<div class="t" style="left:497px;top:151px;font-size:8px;color:#222"><b>#</b></div>
<div class="a" style="left:505px;top:156px;width:46px;height:1px;background:#222"></div>
<svg class="a" style="left:556px;top:153px;" width="6" height="4" viewBox="0 0 6 4"><path d="M0 0 H5 L2.5 2.5 Z" fill="#999"/></svg>
<svg class="a" style="left:563px;top:148px;" width="15" height="15" viewBox="0 0 15 15"><circle cx="6" cy="6" r="4.5" fill="#fff" stroke="#666" stroke-width="1.1"/><path d="M9.5 9.5 L14 14" stroke="#555" stroke-width="1.6"/><path d="M4 6 H8" stroke="#666"/></svg>
<svg class="a" style="left:583px;top:148px;" width="15" height="15" viewBox="0 0 15 15"><circle cx="6" cy="6" r="4.5" fill="#fff" stroke="#666" stroke-width="1.1"/><path d="M9.5 9.5 L14 14" stroke="#555" stroke-width="1.6"/><rect x="4" y="4" width="4" height="4" fill="#444"/></svg>
<svg class="a" style="left:603px;top:148px;" width="15" height="15" viewBox="0 0 15 15"><circle cx="6" cy="6" r="4.5" fill="#fff" stroke="#666" stroke-width="1.1"/><path d="M9.5 9.5 L14 14" stroke="#555" stroke-width="1.6"/><path d="M3 6 H9 M4 4 L3 6 L4 8 M8 4 L9 6 L8 8" stroke="#444" fill="none"/></svg>
<svg class="a" style="left:622px;top:148px;" width="15" height="15" viewBox="0 0 15 15"><circle cx="6" cy="6" r="4.5" fill="#fff" stroke="#666" stroke-width="1.1"/><path d="M9.5 9.5 L14 14" stroke="#555" stroke-width="1.6"/><path d="M3.5 6 H8.5 M6 3.5 V8.5" stroke="#444"/></svg>
<svg class="a" style="left:641px;top:148px;" width="15" height="15" viewBox="0 0 15 15"><circle cx="6" cy="6" r="4.5" fill="#fff" stroke="#666" stroke-width="1.1"/><path d="M9.5 9.5 L14 14" stroke="#555" stroke-width="1.6"/><path d="M3.5 6 H8.5" stroke="#444"/></svg>
<svg class="a" style="left:660px;top:148px;" width="15" height="15" viewBox="0 0 15 15"><circle cx="6" cy="6" r="4.5" fill="#fff" stroke="#666" stroke-width="1.1"/><path d="M9.5 9.5 L14 14" stroke="#555" stroke-width="1.6"/><path d="M4 8 L8 4 M4 4 V8 H8" stroke="#444" fill="none"/></svg>
<div class="a" style="left:699px;top:149px;width:38px;height:13px;background:#000"></div>
<div class="t" style="left:708px;top:151px;font-size:8px;color:#fff;letter-spacing:-.3px"><b>###</b></div>
<div class="a" style="left:740px;top:149px;width:12px;height:12px;background:#000000"></div>
<div class="a" style="left:755px;top:149px;width:12px;height:12px;background:#1a1a80"></div>
<div class="a" style="left:770px;top:149px;width:12px;height:12px;background:#228b22"></div>
<div class="a" style="left:785px;top:149px;width:12px;height:12px;background:#2f8f8f"></div>
<div class="a" style="left:800px;top:149px;width:12px;height:12px;background:#8b1010"></div>
<div class="a" style="left:815px;top:149px;width:12px;height:12px;background:#8b1f8b"></div>
<div class="a" style="left:830px;top:149px;width:12px;height:12px;background:#8b8b10"></div>
<div class="a" style="left:845px;top:149px;width:12px;height:12px;background:#c8c8c8"></div>
<div class="a" style="left:860px;top:149px;width:12px;height:12px;background:#8c8c8c"></div>
<div class="a" style="left:875px;top:149px;width:12px;height:12px;background:#3030f0"></div>
<div class="a" style="left:890px;top:149px;width:12px;height:12px;background:#40f020"></div>
<div class="a" style="left:905px;top:149px;width:12px;height:12px;background:#50f0f0"></div>
<div class="a" style="left:920px;top:149px;width:12px;height:12px;background:#f02010"></div>
<div class="a" style="left:935px;top:149px;width:12px;height:12px;background:#f040f0"></div>
<div class="a" style="left:950px;top:149px;width:12px;height:12px;background:#f8f808"></div>
<div class="a" style="left:965px;top:149px;width:12px;height:12px;background:#fcfcfc"></div>
<svg class="a" style="left:979px;top:147px;" width="14" height="15" viewBox="0 0 14 15"><rect x="1.5" y="1.5" width="11" height="12" rx="2" fill="#eee" stroke="#444"/><rect x="4" y="4" width="6" height="7" fill="#fff" stroke="#444" stroke-width=".7"/><path d="M6 5 V10" stroke="#e03030"/></svg>
<div class="t" style="left:1000px;top:151px;font-size:9px;color:#333;letter-spacing:-.5px">##</div>
<svg class="a" style="left:1019px;top:148px;" width="12" height="14" viewBox="0 0 12 14"><path d="M1 1 V13 M4 1 V13" stroke="#a04040" stroke-dasharray="1 1"/><rect x="7" y="1" width="4" height="3" fill="#e02020"/><rect x="7" y="4" width="4" height="3" fill="#222"/><rect x="7" y="7" width="4" height="3" fill="#20c0e0"/><rect x="7" y="10" width="4" height="3" fill="#f0e020"/></svg>
<svg class="a" style="left:1039px;top:148px;" width="12" height="14" viewBox="0 0 12 14"><path d="M2 2 V13" stroke="#e04020" stroke-width="1.5"/><path d="M5 2 V13" stroke="#f0c020" stroke-width="1.5"/><path d="M8 2 V13" stroke="#40a040" stroke-width="1.5"/><path d="M10.5 1 V13" stroke="#7090c0" stroke-dasharray="1 1"/></svg>
<div class="t" style="left:1070px;top:150px;font-size:9px;color:#333">1</div>
<div class="t" style="left:1107px;top:150px;font-size:9px;color:#333">2</div>
<div class="t" style="left:1144px;top:150px;font-size:9px;color:#333">3</div>
<div class="t" style="left:1181px;top:150px;font-size:9px;color:#333">4</div>
<div class="t" style="left:1218px;top:150px;font-size:9px;color:#333">5</div>
<div class="t" style="left:1255px;top:150px;font-size:9px;color:#333">6</div>
<div class="t" style="left:1292px;top:150px;font-size:9px;color:#333">7</div>
<div class="t" style="left:1329px;top:150px;font-size:9px;color:#333">8</div>
<div class="t" style="left:1366px;top:150px;font-size:9px;color:#333">9</div>
<div class="t" style="left:1401px;top:150px;font-size:9px;color:#333">10</div>
<div id="view" class="a"></div>
<div id="rpanel" class="a"></div>
<div class="vtab" style="top:167px;height:96px"><span style="top:18px">Bearbeitungen</span></div>
<div class="vtab" style="top:274px;height:110px"><span style="top:5px">Bearbeitung einfügen</span></div>
<div class="vtab" style="top:395px;height:110px"><span style="top:5px">Baugruppen einfügen</span></div>
<svg class="a" style="left:1414px;top:169px;" width="13" height="13" viewBox="0 0 13 13"><path d="M2 7 L7 2 L12 6 V10 L7 12 L2 10 Z" fill="#f8f070" stroke="#888" stroke-width=".8"/><path d="M7 7 L12 6 M7 7 V12 M2 7 L7 7" stroke="#888" stroke-width=".7" fill="none"/></svg>
<svg class="a" style="left:0;top:0" width="1411" height="751" viewBox="0 0 1411 751"><defs>
<linearGradient id="gweb" x1="1351" y1="470" x2="1111" y2="690" gradientUnits="userSpaceOnUse">
<stop offset="0" stop-color="#d2e0c8"/><stop offset=".2" stop-color="#dfe9d2"/><stop offset=".5" stop-color="#d2e2cf"/><stop offset=".66" stop-color="#b6cede"/><stop offset=".78" stop-color="#7aa4d8"/><stop offset=".9" stop-color="#5c8ed0"/><stop offset="1" stop-color="#4f82cc"/></linearGradient>
<linearGradient id="gpur" x1="617" y1="0" x2="1111" y2="0" gradientUnits="userSpaceOnUse">
<stop offset="0" stop-color="#9a90de"/><stop offset="1" stop-color="#a898dc"/></linearGradient>
<linearGradient id="gplate" x1="915" y1="380" x2="1300" y2="480" gradientUnits="userSpaceOnUse">
<stop offset="0" stop-color="#a6c2d6"/><stop offset="1" stop-color="#a2bed2"/></linearGradient>
</defs><polygon points="915,353 1394,413 1346,420 915,366" fill="#a6a79a"/><polygon points="915,366 1346,420 1246,509 915,465" fill="url(#gplate)"/><path d="M915 465 L1248 507" stroke="#1a1a1a" stroke-width="1.1"/><path d="M915 353 L1394 413" stroke="#111" stroke-width="1.4"/><path d="M915 366 L1346 420" stroke="#c04848" stroke-width="1"/><polygon points="1351,450 1131,643 1111,640 1111,715 1114,719 1351,509" fill="url(#gweb)"/><path d="M1351.5 450 V508" stroke="#222" stroke-width="1"/><polygon points="1351,506 1394,511 1131,740 1114,720" fill="#a3a397"/><path d="M1352 509 L1115 720" stroke="#e2eedb" stroke-width="4.2"/><path d="M1356 512 L1119 723" stroke="#4a5048" stroke-width=".8"/><path d="M1394 512 L1131 741" stroke="#e8f0e0" stroke-width="2.2"/><path d="M1396 513 L1133 743" stroke="#2a2a2a" stroke-width=".8"/><path d="M1351 506 L1394 511" stroke="#777" stroke-width="1"/><polygon points="1394,413 1346,420 1110,626 1131,644" fill="#a6a79a"/><path d="M1394 413 L1131 644" stroke="#111" stroke-width="1.5"/><path d="M1346 420 L1109 626" stroke="#c04848" stroke-width="1"/><path d="M1346 420 L1394 413" stroke="#5a7a70" stroke-width=".8"/><polygon points="560,558 1109,626 1131,644 1111,643 560,574" fill="#c48cbc"/><polygon points="560,574 1111,643 1111,714 560,648" fill="url(#gpur)"/><polygon points="560,648 1111,714 1131,741 560,668.5" fill="#c99ccc"/><path d="M560 650 L1111 716" stroke="#ecd4f4" stroke-width="2.5"/><path d="M617 565 L1109 626" stroke="#8a1818" stroke-width="1.1"/><path d="M560 570 L1100 631" stroke="#8a2020" stroke-width=".9"/><path d="M560 574 L1111 643" stroke="#e040e0" stroke-width=".9" stroke-dasharray="1.5 1.5"/><path d="M560 574 L1111 637" stroke="#ffffff" stroke-width=".8" stroke-dasharray="5 2 1 2" opacity=".8"/><path d="M560 655 L1111 722" stroke="#ffffff" stroke-width=".8" stroke-dasharray="5 2 1 2" opacity=".8"/><path d="M617 654 L1111 713" stroke="#e040e0" stroke-width=".9" stroke-dasharray="1.5 1.5"/><path d="M560 668.5 L1131 742" stroke="#e020e0" stroke-width="1.3" stroke-dasharray="1.5 1.5"/><path d="M1111 643 V714" stroke="#f0d0f0" stroke-width="1" stroke-dasharray="4 2 1 2"/><rect x="1109" y="713" width="4" height="4" fill="#fff" stroke="#e04040" stroke-width=".8"/><path d="M1082 624 L1100 628 L1090 631 Z" fill="#a01010"/><ellipse cx="633" cy="573" rx="15" ry="6.5" fill="none" stroke="#9a1010" stroke-width="2.4" transform="rotate(-6 633 573)"/><polygon points="19,502 90,440 90,498 19,503" fill="#c6cbbc"/><polygon points="71,493 90,475 90,498 62,500" fill="#c0dcd0"/><path d="M19 502 L90 440.5" stroke="#1a1a1a" stroke-width="1.2"/><path d="M52 487 L90 455" stroke="#b04040" stroke-width=".9"/><path d="M71 493 L90 475" stroke="#b04040" stroke-width=".9"/><path d="M22 490 L90 500" stroke="#a02020" stroke-width=".8"/><polygon points="19,502 90,497 90,510 19,506" fill="#cc98c8"/><path d="M19 506 L90 510" stroke="#e020e0" stroke-width="1" stroke-dasharray="1.5 1.5"/><path d="M19 503 L90 498" stroke="#f0c8f0" stroke-width="1"/><polygon points="62,510 90,510 90,588 62,588" fill="#9d93dc"/><path d="M62 510 V588" stroke="#e040e0" stroke-width="1" stroke-dasharray="1.5 1.5"/><path d="M66 510 V588" stroke="#fff" stroke-width=".8" stroke-dasharray="5 2 1 2"/><path d="M45 487 L57 487 L50 493 Z" fill="#a01010"/><path d="M58 503 L77 503 L68 508 Z" fill="#a01010"/><circle cx="65" cy="496" r="4" fill="none" stroke="#507070" stroke-width="1"/><polygon points="20,599 62,563 62,590" fill="#a8aaa0"/><path d="M20 599 L62 563" stroke="#1a1a1a" stroke-width="1.2"/><polygon points="19,598 90,588 90,612 19,603" fill="#cc9fcc"/><path d="M19 599 L90 590" stroke="#f0d8f8" stroke-width="2"/><path d="M19 603 L90 612" stroke="#e020e0" stroke-width="1.2" stroke-dasharray="1.5 1.5"/><rect x="58" y="584" width="5" height="5" fill="#fff" stroke="#e03030" stroke-width="1"/><path d="M41 712 V690" stroke="#c02020" stroke-width="2.2"/><path d="M37.5 692 L41 682 L44.5 692 Z" fill="#c02020"/><text x="38" y="681" font-size="7.5" font-weight="bold" fill="#b02020" font-family="Liberation Sans">Z</text><path d="M41 712 L66 715" stroke="#30c030" stroke-width="2.2"/><path d="M63 711 L73 716 L63 719 Z" fill="#30c030"/><text x="75" y="719" font-size="7" font-weight="bold" fill="#30c030" font-family="Liberation Sans">X</text><path d="M42 710 L51 703" stroke="#3030d0" stroke-width="2.2"/><ellipse cx="50" cy="704" rx="3.5" ry="3" fill="#3030d0" transform="rotate(-35 50 704)"/><text x="54" y="700" font-size="6" font-weight="bold" fill="#3030d0" font-family="Liberation Sans">Y</text><path d="M1008 477 V455" stroke="#c02020" stroke-width="2.2"/><path d="M1004.5 457 L1008 447 L1011.5 457 Z" fill="#c02020"/><text x="1005" y="446" font-size="7.5" font-weight="bold" fill="#b02020" font-family="Liberation Sans">Z</text><path d="M1008 477 L1033 480" stroke="#30c030" stroke-width="2.2"/><path d="M1030 476 L1040 481 L1030 484 Z" fill="#30c030"/><text x="1042" y="484" font-size="7" font-weight="bold" fill="#30c030" font-family="Liberation Sans">X</text><path d="M1009 475 L1018 468" stroke="#3030d0" stroke-width="2.2"/><ellipse cx="1017" cy="469" rx="3.5" ry="3" fill="#3030d0" transform="rotate(-35 1017 469)"/><text x="1021" y="465" font-size="6" font-weight="bold" fill="#3030d0" font-family="Liberation Sans">Y</text></svg>
<div class="a" style="left:1396px;top:736px;width:14px;height:14px;background:#f0f0f2;border:1px solid #c8c8cc"></div>
<div class="a" style="left:1402px;top:742px;width:2px;height:2px;background:#222"></div>
<div id="status" class="a"></div>
<div class="t" style="left:7px;top:773px;font-size:9px;color:#1c1c24">Drag &amp; Drop</div>
<div class="a" style="left:1123px;top:752px;width:2px;height:51px;background:#eceef2;border-left:1px solid #b4b7be"></div>
<div class="t" style="left:1153px;top:760px;font-size:9px;color:#1c1c24">L: Punkt</div>
<div class="t" style="left:1142px;top:784px;font-size:9px;color:#1c1c24">R: Abbrechen</div>
<svg class="a" style="left:1210px;top:782px;" width="12" height="12" viewBox="0 0 12 12"><rect x=".5" y=".5" width="11" height="11" fill="#dfe8f4" stroke="#3c7ad0"/><path d="M3 6 H8 M5 4 L3 6 L5 8" stroke="#3c7ad0" fill="none" stroke-width=".9"/></svg>
<div class="t" style="left:1225px;top:784px;font-size:9px;color:#1c1c24">Elementwahl</div>
<svg class="a" style="left:1285px;top:757px;" width="18" height="16" viewBox="0 0 18 16"><path d="M5 12 V3" stroke="#e02020" stroke-width="1.8"/><path d="M2 5 L5 1 L8 5 Z" fill="#e02020"/><path d="M5 12 H13" stroke="#20a020" stroke-width="1.8"/><path d="M11 9 L16 12 L11 15 Z" fill="#20a020"/><circle cx="5" cy="12" r="2" fill="#eee" stroke="#777" stroke-width=".6"/></svg>
<svg class="a" style="left:1287px;top:780px;" width="14" height="14" viewBox="0 0 14 14"><circle cx="7" cy="7" r="5.5" fill="#fff0a0" stroke="#f0e020" stroke-width="1.6"/><path d="M7 3 V11 M3 7 H11" stroke="#e03030" stroke-width="1.4"/></svg>
<div class="t" style="left:1308px;top:757px;font-family:'Liberation Serif';font-size:10px;color:#2c6ad0"><b>X:</b></div>
<div class="a" style="left:1322px;top:754px;width:63px;height:15px;background:#e6e7ea;border-bottom:1px solid #c8cace"></div>
<div class="t" style="left:1326px;top:757px;font-size:9px;color:#222;width:56px;text-align:right">1611.737772</div>
<div class="t" style="left:1308px;top:773px;font-family:'Liberation Serif';font-size:10px;color:#2c6ad0"><b>Y:</b></div>
<div class="a" style="left:1322px;top:770px;width:63px;height:15px;background:#e6e7ea;border-bottom:1px solid #c8cace"></div>
<div class="t" style="left:1326px;top:773px;font-size:9px;color:#222;width:56px;text-align:right">446.174978</div>
<div class="t" style="left:1308px;top:788px;font-family:'Liberation Serif';font-size:10px;color:#2c6ad0"><b>Z:</b></div>
<div class="a" style="left:1322px;top:785px;width:63px;height:15px;background:#e6e7ea;border-bottom:1px solid #c8cace"></div>
<div class="t" style="left:1326px;top:788px;font-size:9px;color:#222;width:56px;text-align:right">0.000000</div>
<svg class="a" style="left:1388px;top:758px;" width="35" height="35" viewBox="0 0 35 35"><g fill="#64c0f0" stroke="#2a8ad0" stroke-width=".8"><path d="M17.5 1 L24 7.5 H20.5 V12 H14.5 V7.5 H11 Z"/><path d="M17.5 34 L24 27.5 H20.5 V23 H14.5 V27.5 H11 Z"/><path d="M1 17.5 L7.5 11 V14.5 H12 V20.5 H7.5 V24 Z"/><path d="M34 17.5 L27.5 11 V14.5 H23 V20.5 H27.5 V24 Z"/></g></svg>
<div class="dlg" style="left:616px;top:256px;width:300px;height:293px">
<div class="a" style="left:0px;top:0px;width:298px;height:22px;background:#fff"></div>
<svg class="a" style="left:281px;top:5px;" width="11" height="11" viewBox="0 0 11 11"><path d="M1 1 L10 10 M10 1 L1 10" stroke="#a8a8a8" stroke-width="1"/></svg>
<div class="a" style="left:14px;top:36px;width:277px;height:116px;border:1px solid #dcdcdc"></div>
<div class="a" style="left:18px;top:31px;width:36px;height:10px;background:#f0f0f0"></div>
<div class="dt" style="left:20px;top:31px;font-size:8px">Optionen</div>
<div class="a" style="left:18px;top:54px;width:80px;height:82px;background:#fff;border:1px solid #555"></div>
<svg class="a" style="left:31px;top:51px;" width="50" height="86" viewBox="0 0 50 86"><path d="M13 6.6 H41 L40 9.2 Q30 10 20 11.5 Q17.4 12.2 17.4 15 V73 Q17.4 75.8 20 76.3 Q30 78 40 80 L41 82.4 H13 Z" fill="#3a9ecb"/><path d="M10 5.5 h6 M13 2.5 v6" stroke="#e02020" stroke-width="1"/><circle cx="13" cy="5.5" r="2" fill="none" stroke="#e02020" stroke-width="1"/></svg>
<div class="a" style="left:103px;top:36px;width:188px;height:65px;background:#f2f2f2;border:1px solid #e2e2e2"></div>
<div class="a" style="left:107px;top:31px;width:52px;height:10px;background:#f0f0f0"></div>
<div class="dt" style="left:109px;top:31px;font-size:8px">Einfügepunkt</div>
<svg class="a" style="left:111.5px;top:45px;" width="12" height="12" viewBox="0 0 12 12"><circle cx="6" cy="6" r="4.6" fill="#fff" stroke="#333" stroke-width="1"/><circle cx="6" cy="6" r="2.3" fill="#222"/></svg>
<svg class="a" style="left:135px;top:45px;" width="12" height="12" viewBox="0 0 12 12"><circle cx="6" cy="6" r="4.6" fill="#fff" stroke="#333" stroke-width="1"/></svg>
<svg class="a" style="left:157px;top:45px;" width="12" height="12" viewBox="0 0 12 12"><circle cx="6" cy="6" r="4.6" fill="#fff" stroke="#333" stroke-width="1"/></svg>
<svg class="a" style="left:111.5px;top:64px;" width="12" height="12" viewBox="0 0 12 12"><circle cx="6" cy="6" r="4.6" fill="#fff" stroke="#333" stroke-width="1"/></svg>
<svg class="a" style="left:135px;top:64px;" width="12" height="12" viewBox="0 0 12 12"><circle cx="6" cy="6" r="4.6" fill="#fff" stroke="#333" stroke-width="1"/></svg>
<svg class="a" style="left:157px;top:64px;" width="12" height="12" viewBox="0 0 12 12"><circle cx="6" cy="6" r="4.6" fill="#fff" stroke="#333" stroke-width="1"/></svg>
<svg class="a" style="left:111.5px;top:81px;" width="12" height="12" viewBox="0 0 12 12"><circle cx="6" cy="6" r="4.6" fill="#fff" stroke="#333" stroke-width="1"/></svg>
<svg class="a" style="left:135px;top:81px;" width="12" height="12" viewBox="0 0 12 12"><circle cx="6" cy="6" r="4.6" fill="#fff" stroke="#333" stroke-width="1"/></svg>
<svg class="a" style="left:157px;top:81px;" width="12" height="12" viewBox="0 0 12 12"><circle cx="6" cy="6" r="4.6" fill="#fff" stroke="#333" stroke-width="1"/></svg>
<div class="dt" style="left:186px;top:54px;font-size:8px">Versatz x</div>
<div class="a" style="left:228px;top:47px;width:34px;height:17px;background:#f0f0f0;border:1px solid #7a7a7a"></div>
<div class="dt" style="left:232px;top:50px;font-size:8px">42.5</div>
<div class="dt" style="left:186px;top:76px;font-size:8px">Versatz y</div>
<div class="a" style="left:228px;top:73px;width:34px;height:17px;background:#f0f0f0;border:1px solid #7a7a7a"></div>
<div class="dt" style="left:232px;top:76px;font-size:8px">-120</div>
<div class="dt" style="left:108px;top:111px;font-size:8px">Drehwinkel</div>
<div class="a" style="left:155px;top:108px;width:27px;height:17px;background:#fff;border:1px solid #7a7a7a"></div>
<div class="dt" style="left:160px;top:111px;font-size:8px">0</div>
<div class="dt" style="left:194px;top:111px;font-size:8px">Grad</div>
<div class="a" style="left:108px;top:134px;width:10px;height:10px;background:#fff;border:1px solid #333"></div>
<div class="dt" style="left:120px;top:135px;font-size:8px">Richtung umkehren</div>
<div class="a" style="left:0px;top:161px;width:80px;height:87px;border:1px solid #dcdcdc;border-left:none"></div>
<div class="a" style="left:0px;top:172px;width:73px;height:15px;background:#e1e1e1;border:1px solid #c8c8c8;border-left:none"></div>
<div class="dt" style="left:14px;top:175px;font-size:8px">E295</div>
<div class="a" style="left:0px;top:200px;width:73px;height:15px;background:#fff;border:1px solid #7a7a7a;border-left:none"></div>
<svg class="a" style="left:61px;top:205px;" width="9" height="6" viewBox="0 0 9 6"><path d="M1 1 L4.5 4.5 L8 1" fill="none" stroke="#555" stroke-width="1"/></svg>
<div class="a" style="left:0px;top:226px;width:73px;height:15px;background:#fff;border:1px solid #7a7a7a;border-left:none"></div>
<svg class="a" style="left:61px;top:231px;" width="9" height="6" viewBox="0 0 9 6"><path d="M1 1 L4.5 4.5 L8 1" fill="none" stroke="#555" stroke-width="1"/></svg>
<div class="a" style="left:89px;top:162px;width:202px;height:84px;border:1px solid #dcdcdc"></div>
<div class="a" style="left:93px;top:157px;width:28px;height:10px;background:#f0f0f0"></div>
<div class="dt" style="left:95px;top:157px;font-size:8px">Extras</div>
<div class="dt" style="left:100px;top:177px;font-size:8px">Prüfzeugnis</div>
<div class="a" style="left:188px;top:173px;width:90px;height:15px;background:#e1e1e1;border:1px solid #c2c2c2"></div>
<div class="dt" style="left:192px;top:175px;font-size:8px">---</div>
<svg class="a" style="left:266px;top:178px;" width="9" height="6" viewBox="0 0 9 6"><path d="M1 1 L4.5 4.5 L8 1" fill="none" stroke="#555" stroke-width="1"/></svg>
<div class="dt" style="left:98px;top:204px;font-size:7.8px">Name (Bezeichnung2)</div>
<div class="a" style="left:188px;top:200px;width:92px;height:18px;background:#fff;border:1px solid #7a7a7a"></div>
<div class="a" style="left:149px;top:263px;width:80px;height:18px;background:#e1e1e1;border:1px solid #c2c2c2"></div>
<div class="dt" style="left:166px;top:267px;font-size:7.8px">Profil ändern</div>
<div class="a" style="left:234px;top:263px;width:55px;height:18px;background:#e1e1e1;border:1px solid #c2c2c2"></div>
<div class="dt" style="left:242px;top:267px;font-size:8px">Abbrechen</div>
</div>
<div class="dlg" style="left:89px;top:181px;width:529px;height:492px">
<div class="a" style="left:0px;top:0px;width:527px;height:22px;background:#fff"></div>
<svg class="a" style="left:6px;top:5px;" width="12" height="10" viewBox="0 0 12 10"><rect x=".5" y=".5" width="11" height="9" fill="#eef0f0" stroke="#ccc"/><rect x="2" y="2" width="3" height="6" fill="#4a9a90"/><rect x="6" y="2" width="3" height="6" fill="#d8dada"/></svg>
<div class="dt" style="left:22px;top:5.5px;font-size:9px;color:#1a1a2a">Profil wählen</div>
<svg class="a" style="left:512px;top:6px;" width="10" height="10" viewBox="0 0 10 10"><path d="M1 1 L9 9 M9 1 L1 9" stroke="#333" stroke-width=".9"/></svg>
<svg class="a" style="left:10px;top:26px;" width="110" height="100" viewBox="0 0 110 100"><path d="M40.6 32 H72.8 A3 3 0 0 1 72.8 38.2 H46.2 V84.4 H72.8 A3 3 0 0 1 72.8 90.5 H40.6 Z" fill="#404040"/><path d="M40.6 19 H73 M40.6 14 V32 M73 14 V32 M38 17 L43 21 M71 17 L75 21" stroke="#222" stroke-width=".9" fill="none"/><path d="M31.3 32 V90.5 M27 32 H40 M27 90.5 H40 M29 30 L33 34 M29 88.5 L33 92.5" stroke="#222" stroke-width=".9" fill="none"/><path d="M75 84.4 H84 M75 90.5 H84 M79 80 V95 M77 82 L81 86 M77 89 L81 93" stroke="#222" stroke-width=".9" fill="none"/><text x="43" y="13.5" font-size="10" font-weight="bold" fill="#111" font-family="Liberation Sans" letter-spacing="0">85.0</text><text x="3" y="62" font-size="10" font-weight="bold" fill="#111" font-family="Liberation Sans" letter-spacing="0">240.0</text><text x="85" y="92" font-size="10" font-weight="bold" fill="#111" font-family="Liberation Sans" letter-spacing="0">9.5</text></svg>
<div class="dt" style="left:139px;top:41px;font-size:8px;color:#1a1a40">Details....</div>
<div class="a" style="left:8px;top:149px;width:110px;height:308px;background:#fff;border:1px solid #999"></div>
<svg class="a" style="left:12px;top:154px;" width="13" height="13" viewBox="0 0 13 13"><rect x="1.5" y="1.5" width="9" height="10" rx="2" fill="none" stroke="#333" stroke-width="1.3"/></svg>
<div class="dt" style="left:29px;top:155.2px;font-size:8px;color:#1e1e2e">Vierkantrohr (1404)</div>
<svg class="a" style="left:12px;top:172px;" width="13" height="13" viewBox="0 0 13 13"><rect x="1" y="1" width="11" height="11" fill="#454545"/></svg>
<div class="dt" style="left:29px;top:173.93px;font-size:8px;color:#1e1e2e">Vierkantstab (32)</div>
<svg class="a" style="left:12px;top:191px;" width="13" height="13" viewBox="0 0 13 13"><rect x="1" y="4" width="11" height="5" fill="#454545"/></svg>
<div class="dt" style="left:29px;top:192.65999999999997px;font-size:8px;color:#1e1e2e">Flachstab (476)</div>
<div class="a" style="left:10px;top:207px;width:17px;height:18px;background:#cce4f7"></div>
<div class="a" style="left:27px;top:207px;width:47px;height:18px;background:#e9e9e9"></div>
<svg class="a" style="left:12px;top:210px;" width="13" height="13" viewBox="0 0 13 13"><path d="M3 2 H10 V3.5 H5 V9.5 H10 V11 H3 Z" fill="#3a3a3a"/></svg>
<div class="dt" style="left:29px;top:211.39px;font-size:8px;color:#1e1e2e">U-Profil (40)</div>
<svg class="a" style="left:12px;top:229px;" width="13" height="13" viewBox="0 0 13 13"><path d="M3 1.5 H8 V3 H10 V4.5 H8.5 V3.2 H4.7 V9.8 H8.5 V8.5 H10 V10 H8 V11.5 H3 Z" fill="#3a3a3a"/></svg>
<div class="dt" style="left:29px;top:230.12px;font-size:8px;color:#1e1e2e">C-Profil (2)</div>
<svg class="a" style="left:12px;top:247px;" width="13" height="13" viewBox="0 0 13 13"><circle cx="6.5" cy="6.5" r="5.8" fill="none" stroke="#333" stroke-width="1.3"/></svg>
<div class="dt" style="left:29px;top:248.85000000000002px;font-size:8px;color:#1e1e2e">Rundrohr (1133)</div>
<svg class="a" style="left:12px;top:266px;" width="13" height="13" viewBox="0 0 13 13"><circle cx="6.5" cy="6.5" r="6.2" fill="#454545"/></svg>
<div class="dt" style="left:29px;top:267.58px;font-size:8px;color:#1e1e2e">Rundstab (43)</div>
<svg class="a" style="left:12px;top:285px;" width="13" height="13" viewBox="0 0 13 13"><path d="M1.5 1.5 H11.5 V4 H7.8 V12 H5.2 V4 H1.5 Z" fill="#3a3a3a"/></svg>
<div class="dt" style="left:29px;top:286.31px;font-size:8px;color:#1e1e2e">T-Profil (56)</div>
<svg class="a" style="left:12px;top:304px;" width="13" height="13" viewBox="0 0 13 13"><path d="M1.5 1.5 H7 V8 H11.5 V11.5 H5 V4.5 H1.5 Z" fill="#3a3a3a"/></svg>
<div class="dt" style="left:29px;top:305.03999999999996px;font-size:8px;color:#1e1e2e">Z-Profil (9)</div>
<svg class="a" style="left:12px;top:322px;" width="13" height="13" viewBox="0 0 13 13"><path d="M3.5 1 H6 V9 H10.5 V11.5 H3.5 Z" fill="#3a3a3a"/></svg>
<div class="dt" style="left:29px;top:323.77px;font-size:8px;color:#1e1e2e">L-Profil (81)</div>
<svg class="a" style="left:12px;top:341px;" width="13" height="13" viewBox="0 0 13 13"><path d="M2 1.5 H11 V3.5 H7.8 V9.5 H11 V11.5 H2 V9.5 H5.2 V3.5 H2 Z" fill="#3a3a3a"/></svg>
<div class="dt" style="left:29px;top:342.5px;font-size:8px;color:#1e1e2e">I-Profil (243)</div>
<svg class="a" style="left:12px;top:360px;" width="13" height="13" viewBox="0 0 13 13"><path d="M1.5 1 H11.5 V4 H7.8 V12 H5.2 V4 H1.5 Z" fill="#3a3a3a"/></svg>
<div class="dt" style="left:29px;top:361.23px;font-size:8px;color:#1e1e2e">TPH/TPB (17)</div>
<div class="a" style="left:134px;top:149px;width:386px;height:307px;background:#fff;border:1px solid #8f8f8f;overflow:hidden"></div>
<div class="dt" style="left:140px;top:155px;font-size:8px;color:#1e1e2e">Bezeichnung</div>
<div class="dt" style="left:188.8px;top:155px;font-size:8px;color:#1e1e2e;width:60px;text-align:right">Höhe</div>
<div class="dt" style="left:231px;top:155px;font-size:8px;color:#1e1e2e;width:60px;text-align:right">Breite</div>
<div class="dt" style="left:274px;top:155px;font-size:8px;color:#1e1e2e;width:60px;text-align:right">Steg</div>
<div class="dt" style="left:317px;top:155px;font-size:8px;color:#1e1e2e;width:60px;text-align:right">Flansch</div>
<div class="dt" style="left:359.6px;top:155px;font-size:8px;color:#1e1e2e;width:60px;text-align:right">Radius 1</div>
<div class="dt" style="left:402.29999999999995px;top:155px;font-size:8px;color:#1e1e2e;width:60px;text-align:right">Radius 2</div>
<div class="a" style="left:210px;top:151px;width:1px;height:17px;background:#ececec"></div>
<div class="a" style="left:253px;top:151px;width:1px;height:17px;background:#ececec"></div>
<div class="a" style="left:297px;top:151px;width:1px;height:17px;background:#ececec"></div>
<div class="a" style="left:339px;top:151px;width:1px;height:17px;background:#ececec"></div>
<div class="a" style="left:382px;top:151px;width:1px;height:17px;background:#ececec"></div>
<div class="a" style="left:424px;top:151px;width:1px;height:17px;background:#ececec"></div>
<div class="a" style="left:467px;top:151px;width:1px;height:17px;background:#ececec"></div>
<div class="a" style="left:139px;top:271.5px;width:329px;height:12px;background:#3478d8"></div>
<div class="dt" style="left:140px;top:170.5px;font-size:8px;color:#1e1e2e">UNP 65</div>
<div class="dt" style="left:188.8px;top:170.5px;font-size:8px;color:#1e1e2e;width:60px;text-align:right">65.00</div>
<div class="dt" style="left:231px;top:170.5px;font-size:8px;color:#1e1e2e;width:60px;text-align:right">42.00</div>
<div class="dt" style="left:274px;top:170.5px;font-size:8px;color:#1e1e2e;width:60px;text-align:right">5.50</div>
<div class="dt" style="left:317px;top:170.5px;font-size:8px;color:#1e1e2e;width:60px;text-align:right">7.50</div>
<div class="dt" style="left:359.6px;top:170.5px;font-size:8px;color:#1e1e2e;width:60px;text-align:right">7.50</div>
<div class="dt" style="left:402.29999999999995px;top:170.5px;font-size:8px;color:#1e1e2e;width:60px;text-align:right">4.00</div>
<div class="dt" style="left:140px;top:183.25px;font-size:8px;color:#1e1e2e">UNP 80</div>
<div class="dt" style="left:188.8px;top:183.25px;font-size:8px;color:#1e1e2e;width:60px;text-align:right">80.00</div>
<div class="dt" style="left:231px;top:183.25px;font-size:8px;color:#1e1e2e;width:60px;text-align:right">45.00</div>
<div class="dt" style="left:274px;top:183.25px;font-size:8px;color:#1e1e2e;width:60px;text-align:right">6.00</div>
<div class="dt" style="left:317px;top:183.25px;font-size:8px;color:#1e1e2e;width:60px;text-align:right">8.00</div>
<div class="dt" style="left:359.6px;top:183.25px;font-size:8px;color:#1e1e2e;width:60px;text-align:right">8.00</div>
<div class="dt" style="left:402.29999999999995px;top:183.25px;font-size:8px;color:#1e1e2e;width:60px;text-align:right">4.00</div>
<div class="dt" style="left:140px;top:196.0px;font-size:8px;color:#1e1e2e">UNP 100</div>
<div class="dt" style="left:188.8px;top:196.0px;font-size:8px;color:#1e1e2e;width:60px;text-align:right">100.00</div>
<div class="dt" style="left:231px;top:196.0px;font-size:8px;color:#1e1e2e;width:60px;text-align:right">50.00</div>
<div class="dt" style="left:274px;top:196.0px;font-size:8px;color:#1e1e2e;width:60px;text-align:right">6.00</div>
<div class="dt" style="left:317px;top:196.0px;font-size:8px;color:#1e1e2e;width:60px;text-align:right">8.50</div>
<div class="dt" style="left:359.6px;top:196.0px;font-size:8px;color:#1e1e2e;width:60px;text-align:right">8.50</div>
<div class="dt" style="left:402.29999999999995px;top:196.0px;font-size:8px;color:#1e1e2e;width:60px;text-align:right">4.50</div>
<div class="dt" style="left:140px;top:208.75px;font-size:8px;color:#1e1e2e">UNP 120</div>
<div class="dt" style="left:188.8px;top:208.75px;font-size:8px;color:#1e1e2e;width:60px;text-align:right">120.00</div>
<div class="dt" style="left:231px;top:208.75px;font-size:8px;color:#1e1e2e;width:60px;text-align:right">55.00</div>
<div class="dt" style="left:274px;top:208.75px;font-size:8px;color:#1e1e2e;width:60px;text-align:right">7.00</div>
<div class="dt" style="left:317px;top:208.75px;font-size:8px;color:#1e1e2e;width:60px;text-align:right">9.00</div>
<div class="dt" style="left:359.6px;top:208.75px;font-size:8px;color:#1e1e2e;width:60px;text-align:right">9.00</div>
<div class="dt" style="left:402.29999999999995px;top:208.75px;font-size:8px;color:#1e1e2e;width:60px;text-align:right">4.50</div>
<div class="dt" style="left:140px;top:221.5px;font-size:8px;color:#1e1e2e">UNP 140</div>
<div class="dt" style="left:188.8px;top:221.5px;font-size:8px;color:#1e1e2e;width:60px;text-align:right">140.00</div>
<div class="dt" style="left:231px;top:221.5px;font-size:8px;color:#1e1e2e;width:60px;text-align:right">60.00</div>
<div class="dt" style="left:274px;top:221.5px;font-size:8px;color:#1e1e2e;width:60px;text-align:right">7.00</div>
<div class="dt" style="left:317px;top:221.5px;font-size:8px;color:#1e1e2e;width:60px;text-align:right">10.00</div>
<div class="dt" style="left:359.6px;top:221.5px;font-size:8px;color:#1e1e2e;width:60px;text-align:right">10.00</div>
<div class="dt" style="left:402.29999999999995px;top:221.5px;font-size:8px;color:#1e1e2e;width:60px;text-align:right">5.00</div>
<div class="dt" style="left:140px;top:234.25px;font-size:8px;color:#1e1e2e">UNP 160</div>
<div class="dt" style="left:188.8px;top:234.25px;font-size:8px;color:#1e1e2e;width:60px;text-align:right">160.00</div>
<div class="dt" style="left:231px;top:234.25px;font-size:8px;color:#1e1e2e;width:60px;text-align:right">65.00</div>
<div class="dt" style="left:274px;top:234.25px;font-size:8px;color:#1e1e2e;width:60px;text-align:right">7.50</div>
<div class="dt" style="left:317px;top:234.25px;font-size:8px;color:#1e1e2e;width:60px;text-align:right">10.50</div>
<div class="dt" style="left:359.6px;top:234.25px;font-size:8px;color:#1e1e2e;width:60px;text-align:right">10.50</div>
<div class="dt" style="left:402.29999999999995px;top:234.25px;font-size:8px;color:#1e1e2e;width:60px;text-align:right">5.50</div>
<div class="dt" style="left:140px;top:247.0px;font-size:8px;color:#1e1e2e">UNP 180</div>
<div class="dt" style="left:188.8px;top:247.0px;font-size:8px;color:#1e1e2e;width:60px;text-align:right">180.00</div>
<div class="dt" style="left:231px;top:247.0px;font-size:8px;color:#1e1e2e;width:60px;text-align:right">70.00</div>
<div class="dt" style="left:274px;top:247.0px;font-size:8px;color:#1e1e2e;width:60px;text-align:right">8.00</div>
<div class="dt" style="left:317px;top:247.0px;font-size:8px;color:#1e1e2e;width:60px;text-align:right">11.00</div>
<div class="dt" style="left:359.6px;top:247.0px;font-size:8px;color:#1e1e2e;width:60px;text-align:right">11.00</div>
<div class="dt" style="left:402.29999999999995px;top:247.0px;font-size:8px;color:#1e1e2e;width:60px;text-align:right">5.50</div>
<div class="dt" style="left:140px;top:259.75px;font-size:8px;color:#1e1e2e">UNP 200</div>
<div class="dt" style="left:188.8px;top:259.75px;font-size:8px;color:#1e1e2e;width:60px;text-align:right">200.00</div>
<div class="dt" style="left:231px;top:259.75px;font-size:8px;color:#1e1e2e;width:60px;text-align:right">75.00</div>
<div class="dt" style="left:274px;top:259.75px;font-size:8px;color:#1e1e2e;width:60px;text-align:right">8.50</div>
<div class="dt" style="left:317px;top:259.75px;font-size:8px;color:#1e1e2e;width:60px;text-align:right">11.50</div>
<div class="dt" style="left:359.6px;top:259.75px;font-size:8px;color:#1e1e2e;width:60px;text-align:right">11.50</div>
<div class="dt" style="left:402.29999999999995px;top:259.75px;font-size:8px;color:#1e1e2e;width:60px;text-align:right">6.00</div>
<div class="dt" style="left:140px;top:272.5px;font-size:8px;color:#ffffff">UNP 220</div>
<div class="dt" style="left:188.8px;top:272.5px;font-size:8px;color:#ffffff;width:60px;text-align:right">220.00</div>
<div class="dt" style="left:231px;top:272.5px;font-size:8px;color:#ffffff;width:60px;text-align:right">80.00</div>
<div class="dt" style="left:274px;top:272.5px;font-size:8px;color:#ffffff;width:60px;text-align:right">9.00</div>
<div class="dt" style="left:317px;top:272.5px;font-size:8px;color:#ffffff;width:60px;text-align:right">12.50</div>
<div class="dt" style="left:359.6px;top:272.5px;font-size:8px;color:#ffffff;width:60px;text-align:right">12.50</div>
<div class="dt" style="left:402.29999999999995px;top:272.5px;font-size:8px;color:#ffffff;width:60px;text-align:right">6.50</div>
<div class="dt" style="left:140px;top:285.25px;font-size:8px;color:#1e1e2e">UNP 240</div>
<div class="dt" style="left:188.8px;top:285.25px;font-size:8px;color:#1e1e2e;width:60px;text-align:right">240.00</div>
<div class="dt" style="left:231px;top:285.25px;font-size:8px;color:#1e1e2e;width:60px;text-align:right">85.00</div>
<div class="dt" style="left:274px;top:285.25px;font-size:8px;color:#1e1e2e;width:60px;text-align:right">9.50</div>
<div class="dt" style="left:317px;top:285.25px;font-size:8px;color:#1e1e2e;width:60px;text-align:right">13.00</div>
<div class="dt" style="left:359.6px;top:285.25px;font-size:8px;color:#1e1e2e;width:60px;text-align:right">13.00</div>
<div class="dt" style="left:402.29999999999995px;top:285.25px;font-size:8px;color:#1e1e2e;width:60px;text-align:right">6.50</div>
<div class="dt" style="left:140px;top:298.0px;font-size:8px;color:#1e1e2e">UNP 260</div>
<div class="dt" style="left:188.8px;top:298.0px;font-size:8px;color:#1e1e2e;width:60px;text-align:right">260.00</div>
<div class="dt" style="left:231px;top:298.0px;font-size:8px;color:#1e1e2e;width:60px;text-align:right">90.00</div>
<div class="dt" style="left:274px;top:298.0px;font-size:8px;color:#1e1e2e;width:60px;text-align:right">10.00</div>
<div class="dt" style="left:317px;top:298.0px;font-size:8px;color:#1e1e2e;width:60px;text-align:right">14.00</div>
<div class="dt" style="left:359.6px;top:298.0px;font-size:8px;color:#1e1e2e;width:60px;text-align:right">14.00</div>
<div class="dt" style="left:402.29999999999995px;top:298.0px;font-size:8px;color:#1e1e2e;width:60px;text-align:right">7.00</div>
<div class="dt" style="left:140px;top:310.75px;font-size:8px;color:#1e1e2e">UNP 280</div>
<div class="dt" style="left:188.8px;top:310.75px;font-size:8px;color:#1e1e2e;width:60px;text-align:right">280.00</div>
<div class="dt" style="left:231px;top:310.75px;font-size:8px;color:#1e1e2e;width:60px;text-align:right">95.00</div>
<div class="dt" style="left:274px;top:310.75px;font-size:8px;color:#1e1e2e;width:60px;text-align:right">10.00</div>
<div class="dt" style="left:317px;top:310.75px;font-size:8px;color:#1e1e2e;width:60px;text-align:right">15.00</div>
<div class="dt" style="left:359.6px;top:310.75px;font-size:8px;color:#1e1e2e;width:60px;text-align:right">15.00</div>
<div class="dt" style="left:402.29999999999995px;top:310.75px;font-size:8px;color:#1e1e2e;width:60px;text-align:right">7.50</div>
<div class="dt" style="left:140px;top:323.5px;font-size:8px;color:#1e1e2e">UNP 300</div>
<div class="dt" style="left:188.8px;top:323.5px;font-size:8px;color:#1e1e2e;width:60px;text-align:right">300.00</div>
<div class="dt" style="left:231px;top:323.5px;font-size:8px;color:#1e1e2e;width:60px;text-align:right">100.00</div>
<div class="dt" style="left:274px;top:323.5px;font-size:8px;color:#1e1e2e;width:60px;text-align:right">10.00</div>
<div class="dt" style="left:317px;top:323.5px;font-size:8px;color:#1e1e2e;width:60px;text-align:right">16.00</div>
<div class="dt" style="left:359.6px;top:323.5px;font-size:8px;color:#1e1e2e;width:60px;text-align:right">16.00</div>
<div class="dt" style="left:402.29999999999995px;top:323.5px;font-size:8px;color:#1e1e2e;width:60px;text-align:right">8.00</div>
<div class="dt" style="left:140px;top:336.25px;font-size:8px;color:#1e1e2e">UNP 320</div>
<div class="dt" style="left:188.8px;top:336.25px;font-size:8px;color:#1e1e2e;width:60px;text-align:right">320.00</div>
<div class="dt" style="left:231px;top:336.25px;font-size:8px;color:#1e1e2e;width:60px;text-align:right">100.00</div>
<div class="dt" style="left:274px;top:336.25px;font-size:8px;color:#1e1e2e;width:60px;text-align:right">14.00</div>
<div class="dt" style="left:317px;top:336.25px;font-size:8px;color:#1e1e2e;width:60px;text-align:right">17.50</div>
<div class="dt" style="left:359.6px;top:336.25px;font-size:8px;color:#1e1e2e;width:60px;text-align:right">17.50</div>
<div class="dt" style="left:402.29999999999995px;top:336.25px;font-size:8px;color:#1e1e2e;width:60px;text-align:right">8.80</div>
<div class="dt" style="left:140px;top:349.0px;font-size:8px;color:#1e1e2e">UNP 350</div>
<div class="dt" style="left:188.8px;top:349.0px;font-size:8px;color:#1e1e2e;width:60px;text-align:right">350.00</div>
<div class="dt" style="left:231px;top:349.0px;font-size:8px;color:#1e1e2e;width:60px;text-align:right">100.00</div>
<div class="dt" style="left:274px;top:349.0px;font-size:8px;color:#1e1e2e;width:60px;text-align:right">14.00</div>
<div class="dt" style="left:317px;top:349.0px;font-size:8px;color:#1e1e2e;width:60px;text-align:right">16.00</div>
<div class="dt" style="left:359.6px;top:349.0px;font-size:8px;color:#1e1e2e;width:60px;text-align:right">16.00</div>
<div class="dt" style="left:402.29999999999995px;top:349.0px;font-size:8px;color:#1e1e2e;width:60px;text-align:right">8.00</div>
<div class="dt" style="left:140px;top:361.75px;font-size:8px;color:#1e1e2e">UNP 380</div>
<div class="dt" style="left:188.8px;top:361.75px;font-size:8px;color:#1e1e2e;width:60px;text-align:right">380.00</div>
<div class="dt" style="left:231px;top:361.75px;font-size:8px;color:#1e1e2e;width:60px;text-align:right">102.00</div>
<div class="dt" style="left:274px;top:361.75px;font-size:8px;color:#1e1e2e;width:60px;text-align:right">13.50</div>
<div class="dt" style="left:317px;top:361.75px;font-size:8px;color:#1e1e2e;width:60px;text-align:right">16.00</div>
<div class="dt" style="left:359.6px;top:361.75px;font-size:8px;color:#1e1e2e;width:60px;text-align:right">16.00</div>
<div class="dt" style="left:402.29999999999995px;top:361.75px;font-size:8px;color:#1e1e2e;width:60px;text-align:right">8.00</div>
<div class="dt" style="left:140px;top:374.5px;font-size:8px;color:#1e1e2e">UNP 400</div>
<div class="dt" style="left:188.8px;top:374.5px;font-size:8px;color:#1e1e2e;width:60px;text-align:right">400.00</div>
<div class="dt" style="left:231px;top:374.5px;font-size:8px;color:#1e1e2e;width:60px;text-align:right">110.00</div>
<div class="dt" style="left:274px;top:374.5px;font-size:8px;color:#1e1e2e;width:60px;text-align:right">14.00</div>
<div class="dt" style="left:317px;top:374.5px;font-size:8px;color:#1e1e2e;width:60px;text-align:right">18.00</div>
<div class="dt" style="left:359.6px;top:374.5px;font-size:8px;color:#1e1e2e;width:60px;text-align:right">18.00</div>
<div class="dt" style="left:402.29999999999995px;top:374.5px;font-size:8px;color:#1e1e2e;width:60px;text-align:right">9.00</div>
<div class="dt" style="left:140px;top:387.25px;font-size:8px;color:#1e1e2e">UAP 80</div>
<div class="dt" style="left:188.8px;top:387.25px;font-size:8px;color:#1e1e2e;width:60px;text-align:right">80.00</div>
<div class="dt" style="left:231px;top:387.25px;font-size:8px;color:#1e1e2e;width:60px;text-align:right">45.00</div>
<div class="dt" style="left:274px;top:387.25px;font-size:8px;color:#1e1e2e;width:60px;text-align:right">5.00</div>
<div class="dt" style="left:317px;top:387.25px;font-size:8px;color:#1e1e2e;width:60px;text-align:right">8.00</div>
<div class="dt" style="left:359.6px;top:387.25px;font-size:8px;color:#1e1e2e;width:60px;text-align:right">8.00</div>
<div class="dt" style="left:402.29999999999995px;top:387.25px;font-size:8px;color:#1e1e2e;width:60px;text-align:right">0.00</div>
<div class="dt" style="left:140px;top:400.0px;font-size:8px;color:#1e1e2e">UAP 100</div>
<div class="dt" style="left:188.8px;top:400.0px;font-size:8px;color:#1e1e2e;width:60px;text-align:right">100.00</div>
<div class="dt" style="left:231px;top:400.0px;font-size:8px;color:#1e1e2e;width:60px;text-align:right">50.00</div>
<div class="dt" style="left:274px;top:400.0px;font-size:8px;color:#1e1e2e;width:60px;text-align:right">5.50</div>
<div class="dt" style="left:317px;top:400.0px;font-size:8px;color:#1e1e2e;width:60px;text-align:right">8.50</div>
<div class="dt" style="left:359.6px;top:400.0px;font-size:8px;color:#1e1e2e;width:60px;text-align:right">8.50</div>
<div class="dt" style="left:402.29999999999995px;top:400.0px;font-size:8px;color:#1e1e2e;width:60px;text-align:right">0.00</div>
<div class="dt" style="left:140px;top:412.75px;font-size:8px;color:#1e1e2e">UAP 130</div>
<div class="dt" style="left:188.8px;top:412.75px;font-size:8px;color:#1e1e2e;width:60px;text-align:right">130.00</div>
<div class="dt" style="left:231px;top:412.75px;font-size:8px;color:#1e1e2e;width:60px;text-align:right">55.00</div>
<div class="dt" style="left:274px;top:412.75px;font-size:8px;color:#1e1e2e;width:60px;text-align:right">6.00</div>
<div class="dt" style="left:317px;top:412.75px;font-size:8px;color:#1e1e2e;width:60px;text-align:right">9.50</div>
<div class="dt" style="left:359.6px;top:412.75px;font-size:8px;color:#1e1e2e;width:60px;text-align:right">9.50</div>
<div class="dt" style="left:402.29999999999995px;top:412.75px;font-size:8px;color:#1e1e2e;width:60px;text-align:right">0.00</div>
<div class="dt" style="left:140px;top:425.5px;font-size:8px;color:#1e1e2e">UAP 150</div>
<div class="dt" style="left:188.8px;top:425.5px;font-size:8px;color:#1e1e2e;width:60px;text-align:right">150.00</div>
<div class="dt" style="left:231px;top:425.5px;font-size:8px;color:#1e1e2e;width:60px;text-align:right">65.00</div>
<div class="dt" style="left:274px;top:425.5px;font-size:8px;color:#1e1e2e;width:60px;text-align:right">7.00</div>
<div class="dt" style="left:317px;top:425.5px;font-size:8px;color:#1e1e2e;width:60px;text-align:right">10.25</div>
<div class="dt" style="left:359.6px;top:425.5px;font-size:8px;color:#1e1e2e;width:60px;text-align:right">10.25</div>
<div class="dt" style="left:402.29999999999995px;top:425.5px;font-size:8px;color:#1e1e2e;width:60px;text-align:right">0.00</div>
<div class="dt" style="left:140px;top:438.25px;font-size:8px;color:#1e1e2e">UAP 175</div>
<div class="dt" style="left:188.8px;top:438.25px;font-size:8px;color:#1e1e2e;width:60px;text-align:right">175.00</div>
<div class="dt" style="left:231px;top:438.25px;font-size:8px;color:#1e1e2e;width:60px;text-align:right">70.00</div>
<div class="dt" style="left:274px;top:438.25px;font-size:8px;color:#1e1e2e;width:60px;text-align:right">7.50</div>
<div class="dt" style="left:317px;top:438.25px;font-size:8px;color:#1e1e2e;width:60px;text-align:right">10.75</div>
<div class="dt" style="left:359.6px;top:438.25px;font-size:8px;color:#1e1e2e;width:60px;text-align:right">10.75</div>
<div class="dt" style="left:402.29999999999995px;top:438.25px;font-size:8px;color:#1e1e2e;width:60px;text-align:right">0.00</div>
<div class="dt" style="left:140px;top:451.0px;font-size:8px;color:#1e1e2e">UAP 200</div>
<div class="dt" style="left:188.8px;top:451.0px;font-size:8px;color:#1e1e2e;width:60px;text-align:right">200.00</div>
<div class="dt" style="left:231px;top:451.0px;font-size:8px;color:#1e1e2e;width:60px;text-align:right">75.00</div>
<div class="dt" style="left:274px;top:451.0px;font-size:8px;color:#1e1e2e;width:60px;text-align:right">8.00</div>
<div class="dt" style="left:317px;top:451.0px;font-size:8px;color:#1e1e2e;width:60px;text-align:right">11.50</div>
<div class="dt" style="left:359.6px;top:451.0px;font-size:8px;color:#1e1e2e;width:60px;text-align:right">11.50</div>
<div class="dt" style="left:402.29999999999995px;top:451.0px;font-size:8px;color:#1e1e2e;width:60px;text-align:right">0.00</div>
<div class="a" style="left:135px;top:455px;width:384px;height:1px;background:#8f8f8f"></div>
<div class="a" style="left:135px;top:456px;width:385px;height:8px;background:#f0f0f0"></div>
<div class="a" style="left:507px;top:151px;width:12px;height:304px;background:#f0f0f0"></div>
<div class="a" style="left:507px;top:163px;width:11px;height:154px;background:#cdcdcd"></div>
<svg class="a" style="left:508px;top:154px;" width="9" height="6" viewBox="0 0 9 6"><path d="M1 5 L4.5 1.5 L8 5" fill="none" stroke="#606060" stroke-width="1"/></svg>
<svg class="a" style="left:508px;top:446px;" width="9" height="6" viewBox="0 0 9 6"><path d="M1 1 L4.5 4.5 L8 1" fill="none" stroke="#606060" stroke-width="1"/></svg>
<div class="a" style="left:341px;top:465px;width:55px;height:17px;background:#e1e1e1;border:2px solid #3c80d8"></div>
<div class="dt" style="left:361px;top:469px;font-size:8.5px;color:#1a1a1a">OK</div>
<div class="a" style="left:464px;top:465px;width:55px;height:17px;background:#e1e1e1;border:1px solid #adadad"></div>
<div class="dt" style="left:472px;top:469px;font-size:8px;color:#1a1a1a">Abbrechen</div>
</div>
<svg class="a" style="left:336px;top:454px;" width="10" height="15" viewBox="0 0 10 15"><path d="M1 1 V12 L3.8 9.5 L6 14 L7.8 13.2 L5.6 8.8 H9 Z" fill="#fff" stroke="#222" stroke-width=".9"/></svg>
</body></html>
